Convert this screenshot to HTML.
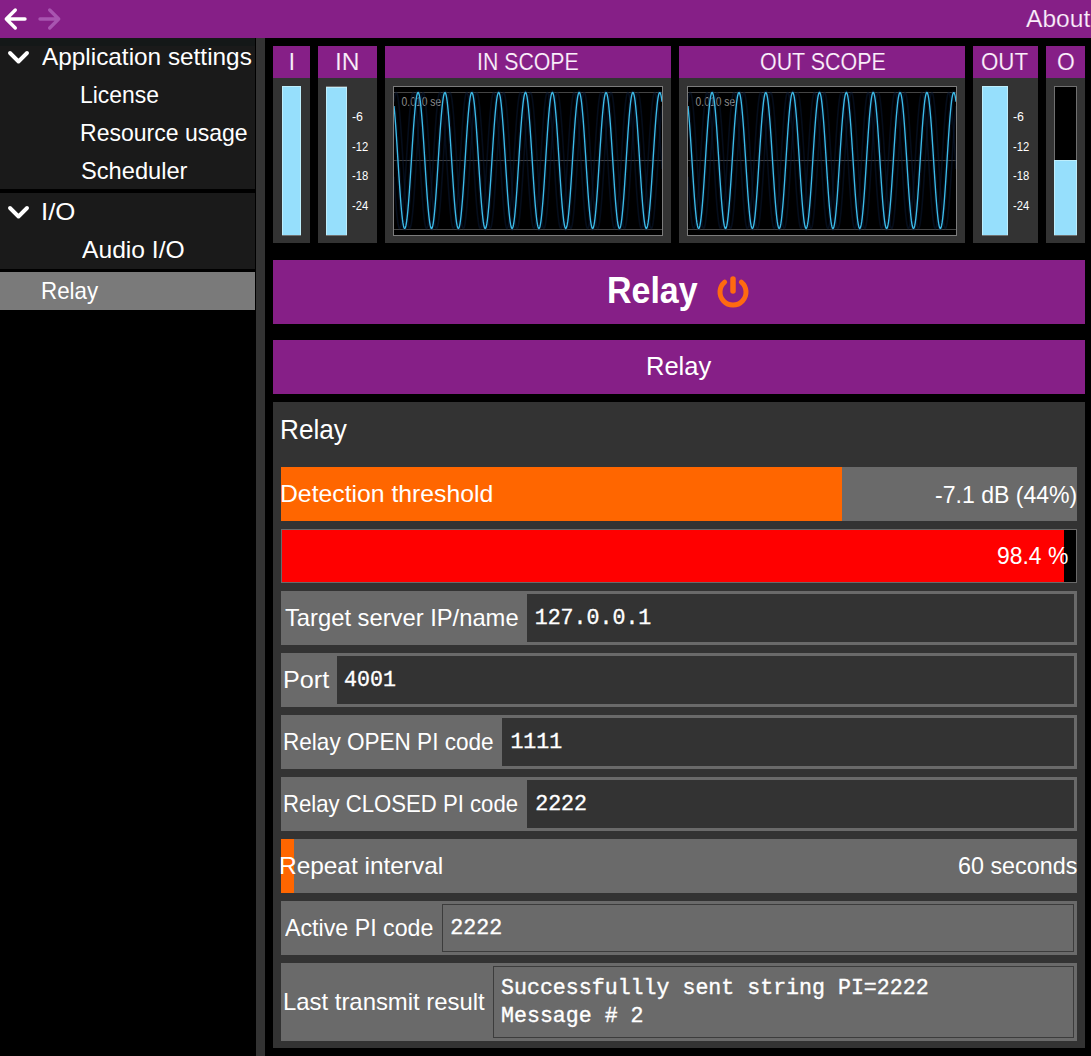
<!DOCTYPE html>
<html><head><meta charset="utf-8"><style>
html,body{margin:0;padding:0;background:#000;width:1091px;height:1056px;overflow:hidden;position:relative}
body>div,body>svg{position:absolute;margin:0}
</style></head><body>
<div style="left:0px;top:0px;width:1091px;height:38px;background:#861f87;"></div>
<svg style="left:0px;top:0px;" width="70" height="38" viewBox="0 0 70 38"><g fill="none" stroke-linecap="round" stroke-linejoin="round" stroke-width="3.4"><path d="M15.3 10 L6.3 19 L15.3 28 M6.3 19 H25" stroke="#ffffff"/><path d="M49.7 10 L58.7 19 L49.7 28 M58.7 19 H40" stroke="#a855b0"/></g></svg>
<div style="left:1025.70px;top:6.98px;font:400 24.5px/24.5px 'Liberation Sans';color:#fbeefb;white-space:pre;transform:scaleX(1.0047);transform-origin:0 0;-webkit-text-stroke:0.2px #861f87;">About</div>
<div style="left:0px;top:38px;width:255px;height:8px;background:#141818;"></div>
<div style="left:0px;top:46px;width:255px;height:143px;background:#1a1a1a;"></div>
<div style="left:0px;top:193px;width:255px;height:76px;background:#1a1a1a;"></div>
<div style="left:0px;top:272px;width:255px;height:38px;background:#7a7a7a;"></div>
<div style="left:256px;top:38px;width:9px;height:1018px;background:#333333;"></div>
<svg style="left:0px;top:45px;" width="40" height="30" viewBox="0 0 40 30"><path d="M10 8 L18.5 16.5 L27 8" fill="none" stroke="#fff" stroke-width="3.9" stroke-linecap="round" stroke-linejoin="round"/></svg>
<svg style="left:0px;top:200px;" width="40" height="30" viewBox="0 0 40 30"><path d="M10 8 L18.5 16.5 L27 8" fill="none" stroke="#fff" stroke-width="3.9" stroke-linecap="round" stroke-linejoin="round"/></svg>
<div style="left:42.40px;top:45.30px;font:400 24px/24px 'Liberation Sans';color:#ffffff;white-space:pre;transform:scaleX(1.0146);transform-origin:0 0;">Application settings</div>
<div style="left:79.79px;top:83.30px;font:400 24px/24px 'Liberation Sans';color:#ffffff;white-space:pre;transform:scaleX(0.9537);transform-origin:0 0;">License</div>
<div style="left:79.78px;top:121.10px;font:400 24px/24px 'Liberation Sans';color:#ffffff;white-space:pre;transform:scaleX(0.9593);transform-origin:0 0;">Resource usage</div>
<div style="left:80.71px;top:158.90px;font:400 24px/24px 'Liberation Sans';color:#ffffff;white-space:pre;transform:scaleX(0.9850);transform-origin:0 0;">Scheduler</div>
<div style="left:41.05px;top:200.20px;font:400 24px/24px 'Liberation Sans';color:#ffffff;white-space:pre;transform:scaleX(1.0759);transform-origin:0 0;">I/O</div>
<div style="left:81.90px;top:237.60px;font:400 24px/24px 'Liberation Sans';color:#ffffff;white-space:pre;transform:scaleX(1.0263);transform-origin:0 0;">Audio I/O</div>
<div style="left:41.34px;top:278.90px;font:400 24px/24px 'Liberation Sans';color:#ffffff;white-space:pre;transform:scaleX(0.9305);transform-origin:0 0;">Relay</div>
<div style="left:273px;top:46px;width:37px;height:32px;background:#861f87;"></div>
<div style="left:273px;top:78px;width:37px;height:165px;background:#333333;"></div>
<div style="left:288.60px;top:50.30px;font:400 24px/24px 'Liberation Sans';color:#fbeefb;white-space:pre;-webkit-text-stroke:0.15px #861f87;">I</div>
<div style="left:318px;top:46px;width:59px;height:32px;background:#861f87;"></div>
<div style="left:318px;top:78px;width:59px;height:165px;background:#333333;"></div>
<div style="left:334.95px;top:50.30px;font:400 24px/24px 'Liberation Sans';color:#fbeefb;white-space:pre;transform:scaleX(1.0238);transform-origin:0 0;-webkit-text-stroke:0.15px #861f87;">IN</div>
<div style="left:385px;top:46px;width:286px;height:32px;background:#861f87;"></div>
<div style="left:385px;top:78px;width:286px;height:165px;background:#333333;"></div>
<div style="left:476.83px;top:50.30px;font:400 24px/24px 'Liberation Sans';color:#fbeefb;white-space:pre;transform:scaleX(0.8875);transform-origin:0 0;-webkit-text-stroke:0.15px #861f87;">IN SCOPE</div>
<div style="left:679px;top:46px;width:286px;height:32px;background:#861f87;"></div>
<div style="left:679px;top:78px;width:286px;height:165px;background:#333333;"></div>
<div style="left:759.61px;top:50.30px;font:400 24px/24px 'Liberation Sans';color:#fbeefb;white-space:pre;transform:scaleX(0.8921);transform-origin:0 0;-webkit-text-stroke:0.15px #861f87;">OUT SCOPE</div>
<div style="left:973px;top:46px;width:65px;height:32px;background:#861f87;"></div>
<div style="left:973px;top:78px;width:65px;height:165px;background:#333333;"></div>
<div style="left:981.47px;top:50.30px;font:400 24px/24px 'Liberation Sans';color:#fbeefb;white-space:pre;transform:scaleX(0.9306);transform-origin:0 0;-webkit-text-stroke:0.15px #861f87;">OUT</div>
<div style="left:1046px;top:46px;width:39px;height:32px;background:#861f87;"></div>
<div style="left:1046px;top:78px;width:39px;height:165px;background:#333333;"></div>
<div style="left:1056.75px;top:50.30px;font:400 24px/24px 'Liberation Sans';color:#fbeefb;white-space:pre;transform:scaleX(0.9529);transform-origin:0 0;-webkit-text-stroke:0.15px #861f87;">O</div>
<div style="left:282px;top:86px;width:19px;height:150px;background:#000000;box-sizing:border-box;border:1px solid #707070;"></div>
<div style="left:282px;top:86px;width:19px;height:149px;background:#96dffc;box-sizing:border-box;border:1px solid #bdeefc;border-bottom:none;"></div>
<div style="left:326px;top:86px;width:21px;height:150px;background:#000000;box-sizing:border-box;border:1px solid #707070;"></div>
<div style="left:326px;top:87px;width:21px;height:148px;background:#96dffc;box-sizing:border-box;border:1px solid #bdeefc;border-bottom:none;"></div>
<div style="left:982px;top:86px;width:26px;height:150px;background:#000000;box-sizing:border-box;border:1px solid #707070;"></div>
<div style="left:982px;top:86px;width:26px;height:149px;background:#96dffc;box-sizing:border-box;border:1px solid #bdeefc;border-bottom:none;"></div>
<div style="left:1054px;top:86px;width:23px;height:150px;background:#000000;box-sizing:border-box;border:1px solid #707070;"></div>
<div style="left:1054px;top:159.5px;width:23px;height:75.5px;background:#96dffc;box-sizing:border-box;border:1px solid #bdeefc;border-bottom:none;"></div>
<div style="left:351.90px;top:111.20px;font:400 12px/12px 'Liberation Sans';color:#ffffff;white-space:pre;transform:scaleX(1.0300);transform-origin:0 0;">-6</div>
<div style="left:351.90px;top:140.50px;font:400 12px/12px 'Liberation Sans';color:#ffffff;white-space:pre;transform:scaleX(0.9353);transform-origin:0 0;">-12</div>
<div style="left:351.90px;top:170.00px;font:400 12px/12px 'Liberation Sans';color:#ffffff;white-space:pre;transform:scaleX(0.9353);transform-origin:0 0;">-18</div>
<div style="left:351.90px;top:199.60px;font:400 12px/12px 'Liberation Sans';color:#ffffff;white-space:pre;transform:scaleX(0.9353);transform-origin:0 0;">-24</div>
<div style="left:1012.60px;top:111.20px;font:400 12px/12px 'Liberation Sans';color:#ffffff;white-space:pre;transform:scaleX(1.0300);transform-origin:0 0;">-6</div>
<div style="left:1012.60px;top:140.50px;font:400 12px/12px 'Liberation Sans';color:#ffffff;white-space:pre;transform:scaleX(0.9353);transform-origin:0 0;">-12</div>
<div style="left:1012.60px;top:170.00px;font:400 12px/12px 'Liberation Sans';color:#ffffff;white-space:pre;transform:scaleX(0.9353);transform-origin:0 0;">-18</div>
<div style="left:1012.60px;top:199.60px;font:400 12px/12px 'Liberation Sans';color:#ffffff;white-space:pre;transform:scaleX(0.9353);transform-origin:0 0;">-24</div>
<svg style="left:393px;top:86px;" width="270" height="150" viewBox="0 0 270 150"><rect x="0.5" y="0.5" width="269" height="149" fill="#000" stroke="#7c7c7c" stroke-width="1"/><line x1="1" y1="6.5" x2="269" y2="6.5" stroke="#444444" stroke-width="1"/><line x1="1" y1="74.5" x2="269" y2="74.5" stroke="#444444" stroke-width="1"/><line x1="1" y1="143.5" x2="269" y2="143.5" stroke="#444444" stroke-width="1"/><text x="8.6" y="20" font-family="Liberation Sans" font-size="12.5" fill="#8c8c8c" textLength="39.6" lengthAdjust="spacingAndGlyphs">0.010 se</text><clipPath id="c393"><rect x="1" y="1" width="268" height="148"/></clipPath><path d="M1.00,90.85 L1.50,98.39 L1.99,105.60 L2.49,112.40 L2.99,118.69 L3.48,124.38 L3.98,129.40 L4.47,133.68 L4.97,137.16 L5.47,139.80 L5.96,141.56 L6.46,142.41 L6.96,142.35 L7.45,141.38 L7.95,139.50 L8.44,136.75 L8.94,133.16 L9.44,128.78 L9.93,123.67 L10.43,117.90 L10.93,111.54 L11.42,104.68 L11.92,97.42 L12.41,89.84 L12.91,82.06 L13.41,74.18 L13.90,66.31 L14.40,58.54 L14.90,50.99 L15.39,43.75 L15.89,36.93 L16.39,30.62 L16.88,24.89 L17.38,19.84 L17.87,15.52 L18.37,11.99 L18.87,9.31 L19.36,7.51 L19.86,6.61 L20.36,6.62 L20.85,7.55 L21.35,9.38 L21.84,12.09 L22.34,15.64 L22.84,19.98 L23.33,25.05 L23.83,30.80 L24.33,37.13 L24.82,43.96 L25.32,51.21 L25.81,58.77 L26.31,66.54 L26.81,74.42 L27.30,82.30 L27.80,90.07 L28.30,97.64 L28.79,104.89 L29.29,111.74 L29.79,118.08 L30.28,123.83 L30.78,128.93 L31.27,133.28 L31.77,136.85 L32.27,139.57 L32.76,141.42 L33.26,142.37 L33.76,142.40 L34.25,141.52 L34.75,139.73 L35.24,137.07 L35.74,133.56 L36.24,129.26 L36.73,124.22 L37.23,118.51 L37.73,112.20 L38.22,105.39 L38.72,98.17 L39.21,90.62 L39.71,82.86 L40.21,74.98 L40.70,67.10 L41.20,59.31 L41.70,51.73 L42.19,44.46 L42.69,37.60 L43.19,31.23 L43.68,25.44 L44.18,20.31 L44.67,15.92 L45.17,12.31 L45.67,9.54 L46.16,7.65 L46.66,6.66 L47.16,6.58 L47.65,7.42 L48.15,9.16 L48.64,11.78 L49.14,15.24 L49.64,19.51 L50.13,24.51 L50.63,30.19 L51.13,36.47 L51.62,43.25 L52.12,50.46 L52.61,57.99 L53.11,65.75 L53.61,73.62 L54.10,81.51 L54.60,89.30 L55.10,96.89 L55.59,104.18 L56.09,111.07 L56.59,117.47 L57.08,123.28 L57.58,128.44 L58.07,132.88 L58.57,136.53 L59.07,139.34 L59.56,141.28 L60.06,142.31 L60.56,142.44 L61.05,141.65 L61.55,139.95 L62.04,137.38 L62.54,133.95 L63.04,129.73 L63.53,124.76 L64.03,119.11 L64.53,112.86 L65.02,106.10 L65.52,98.91 L66.01,91.39 L66.51,83.64 L67.01,75.77 L67.50,67.89 L68.00,60.09 L68.50,52.49 L68.99,45.18 L69.49,38.27 L69.99,31.84 L70.48,25.99 L70.98,20.80 L71.47,16.33 L71.97,12.64 L72.47,9.78 L72.96,7.80 L73.46,6.72 L73.96,6.55 L74.45,7.29 L74.95,8.94 L75.44,11.47 L75.94,14.86 L76.44,19.04 L76.93,23.98 L77.43,29.59 L77.93,35.81 L78.42,42.55 L78.92,49.72 L79.41,57.22 L79.91,64.96 L80.41,72.83 L80.90,80.72 L81.40,88.52 L81.90,96.14 L82.39,103.46 L82.89,110.40 L83.39,116.85 L83.88,122.73 L84.38,127.96 L84.87,132.47 L85.37,136.20 L85.87,139.09 L86.36,141.12 L86.86,142.25 L87.36,142.47 L87.85,141.77 L88.35,140.16 L88.84,137.68 L89.34,134.33 L89.84,130.19 L90.33,125.29 L90.83,119.71 L91.33,113.52 L91.82,106.80 L92.32,99.65 L92.81,92.16 L93.31,84.43 L93.81,76.57 L94.30,68.68 L94.80,60.87 L95.30,53.24 L95.79,45.90 L96.29,38.94 L96.79,32.47 L97.28,26.55 L97.78,21.29 L98.27,16.74 L98.77,12.97 L99.27,10.03 L99.76,7.96 L100.26,6.78 L100.76,6.52 L101.25,7.17 L101.75,8.73 L102.24,11.18 L102.74,14.48 L103.24,18.59 L103.73,23.45 L104.23,28.99 L104.73,35.16 L105.22,41.85 L105.72,48.98 L106.21,56.46 L106.71,64.17 L107.21,72.03 L107.70,79.92 L108.20,87.74 L108.70,95.38 L109.19,102.74 L109.69,109.72 L110.19,116.22 L110.68,122.16 L111.18,127.46 L111.67,132.05 L112.17,135.86 L112.67,138.84 L113.16,140.96 L113.66,142.18 L114.16,142.49 L114.65,141.88 L115.15,140.37 L115.64,137.97 L116.14,134.71 L116.64,130.64 L117.13,125.82 L117.63,120.30 L118.13,114.17 L118.62,107.50 L119.12,100.39 L119.61,92.93 L120.11,85.22 L120.61,77.36 L121.10,69.47 L121.60,61.65 L122.10,54.00 L122.59,46.62 L123.09,39.62 L123.59,33.09 L124.08,27.12 L124.58,21.79 L125.07,17.17 L125.57,13.32 L126.07,10.29 L126.56,8.13 L127.06,6.86 L127.56,6.51 L128.05,7.07 L128.55,8.54 L129.04,10.89 L129.54,14.11 L130.04,18.14 L130.53,22.92 L131.03,28.41 L131.53,34.51 L132.02,41.15 L132.52,48.24 L133.01,55.69 L133.51,63.39 L134.01,71.24 L134.50,79.13 L135.00,86.96 L135.50,94.62 L135.99,102.01 L136.49,109.03 L136.99,115.59 L137.48,121.59 L137.98,126.96 L138.47,131.62 L138.97,135.51 L139.47,138.58 L139.96,140.78 L140.46,142.10 L140.96,142.50 L141.45,141.98 L141.95,140.56 L142.44,138.25 L142.94,135.07 L143.44,131.09 L143.93,126.33 L144.43,120.89 L144.93,114.81 L145.42,108.19 L145.92,101.12 L146.41,93.69 L146.91,86.00 L147.41,78.16 L147.90,70.27 L148.40,62.43 L148.90,54.76 L149.39,47.35 L149.89,40.31 L150.39,33.73 L150.88,27.70 L151.38,22.30 L151.87,17.60 L152.37,13.67 L152.87,10.56 L153.36,8.31 L153.86,6.95 L154.36,6.50 L154.85,6.97 L155.35,8.35 L155.84,10.62 L156.34,13.75 L156.84,17.69 L157.33,22.41 L157.83,27.82 L158.33,33.87 L158.82,40.46 L159.32,47.51 L159.81,54.93 L160.31,62.60 L160.81,70.44 L161.30,78.34 L161.80,86.18 L162.30,93.86 L162.79,101.28 L163.29,108.35 L163.79,114.95 L164.28,121.01 L164.78,126.45 L165.27,131.18 L165.77,135.15 L166.27,138.31 L166.76,140.60 L167.26,142.01 L167.76,142.50 L168.25,142.08 L168.75,140.74 L169.24,138.52 L169.74,135.43 L170.24,131.52 L170.73,126.85 L171.23,121.46 L171.73,115.45 L172.22,108.88 L172.72,101.85 L173.21,94.45 L173.71,86.79 L174.21,78.95 L174.70,71.06 L175.20,63.21 L175.70,55.52 L176.19,48.08 L176.69,41.00 L177.19,34.37 L177.68,28.28 L178.18,22.81 L178.67,18.04 L179.17,14.03 L179.67,10.83 L180.16,8.49 L180.66,7.04 L181.16,6.50 L181.65,6.88 L182.15,8.17 L182.64,10.35 L183.14,13.39 L183.64,17.26 L184.13,21.90 L184.63,27.25 L185.13,33.23 L185.62,39.78 L186.12,46.78 L186.61,54.17 L187.11,61.82 L187.61,69.65 L188.10,77.54 L188.60,85.39 L189.10,93.10 L189.59,100.55 L190.09,107.65 L190.59,114.31 L191.08,120.43 L191.58,125.93 L192.07,130.74 L192.57,134.79 L193.07,138.03 L193.56,140.41 L194.06,141.90 L194.56,142.49 L195.05,142.16 L195.55,140.92 L196.04,138.78 L196.54,135.78 L197.04,131.95 L197.53,127.35 L198.03,122.04 L198.53,116.08 L199.02,109.57 L199.52,102.58 L200.01,95.21 L200.51,87.57 L201.01,79.75 L201.50,71.86 L202.00,64.00 L202.50,56.29 L202.99,48.82 L203.49,41.69 L203.99,35.01 L204.48,28.86 L204.98,23.33 L205.47,18.48 L205.97,14.39 L206.47,11.11 L206.96,8.69 L207.46,7.15 L207.96,6.52 L208.45,6.80 L208.95,8.00 L209.44,10.09 L209.94,13.05 L210.44,16.84 L210.93,21.40 L211.43,26.68 L211.93,32.60 L212.42,39.09 L212.92,46.06 L213.41,53.41 L213.91,61.04 L214.41,68.86 L214.90,76.75 L215.40,84.61 L215.90,92.33 L216.39,99.81 L216.89,106.96 L217.39,113.66 L217.88,119.84 L218.38,125.41 L218.87,130.29 L219.37,134.42 L219.87,137.74 L220.36,140.21 L220.86,141.80 L221.36,142.47 L221.85,142.24 L222.35,141.09 L222.84,139.04 L223.34,136.12 L223.84,132.37 L224.33,127.85 L224.83,122.60 L225.33,116.71 L225.82,110.25 L226.32,103.30 L226.81,95.97 L227.31,88.35 L227.81,80.54 L228.30,72.65 L228.80,64.79 L229.30,57.05 L229.79,49.55 L230.29,42.39 L230.79,35.66 L231.28,29.46 L231.78,23.86 L232.27,18.94 L232.77,14.77 L233.27,11.41 L233.76,8.89 L234.26,7.26 L234.76,6.54 L235.25,6.73 L235.75,7.83 L236.24,9.84 L236.74,12.71 L237.24,16.42 L237.73,20.91 L238.23,26.12 L238.73,31.98 L239.22,38.42 L239.72,45.34 L240.21,52.65 L240.71,60.26 L241.21,68.06 L241.70,75.95 L242.20,83.82 L242.70,91.56 L243.19,99.07 L243.69,106.26 L244.19,113.01 L244.68,119.24 L245.18,124.88 L245.67,129.83 L246.17,134.04 L246.67,137.44 L247.16,140.00 L247.66,141.68 L248.16,142.45 L248.65,142.30 L249.15,141.24 L249.64,139.28 L250.14,136.45 L250.64,132.79 L251.13,128.34 L251.63,123.16 L252.13,117.33 L252.62,110.92 L253.12,104.02 L253.61,96.72 L254.11,89.13 L254.61,81.33 L255.10,73.45 L255.60,65.57 L256.10,57.82 L256.59,50.30 L257.09,43.10 L257.59,36.32 L258.08,30.06 L258.58,24.39 L259.07,19.40 L259.57,15.16 L260.07,11.71 L260.56,9.11 L261.06,7.39 L261.56,6.57 L262.05,6.67 L262.55,7.68 L263.04,9.60 L263.54,12.38 L264.04,16.01 L264.53,20.42 L265.03,25.56 L265.53,31.36 L266.02,37.74 L266.52,44.62 L267.01,51.90 L267.51,59.49 L268.01,67.27 L268.50,75.16 L269.00,83.03" fill="none" stroke="#0a1a36" stroke-width="1.6" opacity="0.5" clip-path="url(#c393)"/><path d="M1.00,15.71 L1.50,12.15 L1.99,9.42 L2.49,7.58 L2.99,6.63 L3.48,6.60 L3.98,7.48 L4.47,9.27 L4.97,11.94 L5.47,15.45 L5.96,19.75 L6.46,24.79 L6.96,30.50 L7.45,36.81 L7.95,43.62 L8.44,50.85 L8.94,58.40 L9.44,66.16 L9.93,74.04 L10.43,81.92 L10.93,89.70 L11.42,97.28 L11.92,104.55 L12.41,111.42 L12.91,117.78 L13.41,123.57 L13.90,128.69 L14.40,133.09 L14.90,136.69 L15.39,139.46 L15.89,141.35 L16.39,142.34 L16.88,142.42 L17.38,141.58 L17.87,139.84 L18.37,137.22 L18.87,133.75 L19.36,129.49 L19.86,124.48 L20.36,118.80 L20.85,112.52 L21.35,105.73 L21.84,98.52 L22.34,90.99 L22.84,83.24 L23.33,75.36 L23.83,67.48 L24.33,59.69 L24.82,52.10 L25.32,44.81 L25.81,37.92 L26.31,31.52 L26.81,25.71 L27.30,20.55 L27.80,16.11 L28.30,12.47 L28.79,9.66 L29.29,7.72 L29.79,6.68 L30.28,6.56 L30.78,7.35 L31.27,9.05 L31.77,11.63 L32.27,15.05 L32.76,19.28 L33.26,24.25 L33.76,29.90 L34.25,36.15 L34.75,42.91 L35.24,50.10 L35.74,57.62 L36.24,65.37 L36.73,73.24 L37.23,81.13 L37.73,88.92 L38.22,96.53 L38.72,103.83 L39.21,110.75 L39.71,117.17 L40.21,123.02 L40.70,128.21 L41.20,132.68 L41.70,136.37 L42.19,139.22 L42.69,141.20 L43.19,142.29 L43.68,142.45 L44.18,141.71 L44.67,140.06 L45.17,137.52 L45.67,134.14 L46.16,129.95 L46.66,125.02 L47.16,119.40 L47.65,113.18 L48.15,106.44 L48.64,99.27 L49.14,91.76 L49.64,84.02 L50.13,76.16 L50.63,68.27 L51.13,60.46 L51.62,52.85 L52.12,45.53 L52.61,38.59 L53.11,32.14 L53.61,26.26 L54.10,21.03 L54.60,16.53 L55.10,12.80 L55.59,9.90 L56.09,7.88 L56.59,6.75 L57.08,6.53 L57.58,7.23 L58.07,8.84 L58.57,11.33 L59.07,14.67 L59.56,18.82 L60.06,23.72 L60.56,29.30 L61.05,35.49 L61.55,42.21 L62.04,49.36 L62.54,56.85 L63.04,64.58 L63.53,72.44 L64.03,80.33 L64.53,88.15 L65.02,95.77 L65.52,103.11 L66.01,110.07 L66.51,116.55 L67.01,122.46 L67.50,127.72 L68.00,132.27 L68.50,136.03 L68.99,138.97 L69.49,141.04 L69.99,142.22 L70.48,142.48 L70.98,141.82 L71.47,140.26 L71.97,137.82 L72.47,134.52 L72.96,130.41 L73.46,125.54 L73.96,119.99 L74.45,113.83 L74.95,107.14 L75.44,100.01 L75.94,92.53 L76.44,84.81 L76.93,76.95 L77.43,69.06 L77.93,61.24 L78.42,53.60 L78.92,46.25 L79.41,39.27 L79.91,32.77 L80.41,26.83 L80.90,21.53 L81.40,16.95 L81.90,13.14 L82.39,10.15 L82.89,8.04 L83.39,6.82 L83.88,6.51 L84.38,7.12 L84.87,8.64 L85.37,11.04 L85.87,14.30 L86.36,18.37 L86.86,23.19 L87.36,28.71 L87.85,34.84 L88.35,41.51 L88.84,48.63 L89.34,56.09 L89.84,63.80 L90.33,71.65 L90.83,79.54 L91.33,87.37 L91.82,95.02 L92.32,102.39 L92.81,109.39 L93.31,115.92 L93.81,121.89 L94.30,127.22 L94.80,131.84 L95.30,135.69 L95.79,138.72 L96.29,140.87 L96.79,142.14 L97.28,142.49 L97.78,141.93 L98.27,140.46 L98.77,138.10 L99.27,134.89 L99.76,130.86 L100.26,126.07 L100.76,120.58 L101.25,114.48 L101.75,107.83 L102.24,100.74 L102.74,93.30 L103.24,85.60 L103.73,77.75 L104.23,69.86 L104.73,62.03 L105.22,54.36 L105.72,46.97 L106.21,39.95 L106.71,33.40 L107.21,27.40 L107.70,22.03 L108.20,17.37 L108.70,13.48 L109.19,10.42 L109.69,8.21 L110.19,6.90 L110.68,6.50 L111.18,7.02 L111.67,8.44 L112.17,10.76 L112.67,13.93 L113.16,17.92 L113.66,22.68 L114.16,28.13 L114.65,34.20 L115.15,40.82 L115.64,47.89 L116.14,55.32 L116.64,63.01 L117.13,70.86 L117.63,78.75 L118.13,86.58 L118.62,94.26 L119.12,101.66 L119.61,108.70 L120.11,115.28 L120.61,121.31 L121.10,126.71 L121.60,131.41 L122.10,135.34 L122.59,138.45 L123.09,140.70 L123.59,142.05 L124.08,142.50 L124.58,142.03 L125.07,140.65 L125.57,138.38 L126.07,135.25 L126.56,131.30 L127.06,126.58 L127.56,121.16 L128.05,115.12 L128.55,108.53 L129.04,101.47 L129.54,94.06 L130.04,86.38 L130.53,78.54 L131.03,70.65 L131.53,62.81 L132.02,55.12 L132.52,47.70 L133.01,40.64 L133.51,34.04 L134.01,27.98 L134.50,22.54 L135.00,17.81 L135.50,13.84 L135.99,10.69 L136.49,8.39 L136.99,6.99 L137.48,6.50 L137.98,6.92 L138.47,8.26 L138.97,10.49 L139.47,13.58 L139.96,17.49 L140.46,22.16 L140.96,27.55 L141.45,33.56 L141.95,40.13 L142.44,47.16 L142.94,54.56 L143.44,62.23 L143.93,70.06 L144.43,77.95 L144.93,85.80 L145.42,93.49 L145.92,100.93 L146.41,108.01 L146.91,114.64 L147.41,120.73 L147.90,126.20 L148.40,130.97 L148.90,134.98 L149.39,138.17 L149.89,140.51 L150.39,141.96 L150.88,142.50 L151.38,142.12 L151.87,140.83 L152.37,138.65 L152.87,135.60 L153.36,131.73 L153.86,127.09 L154.36,121.74 L154.85,115.75 L155.35,109.21 L155.84,102.20 L156.34,94.82 L156.84,87.16 L157.33,79.34 L157.83,71.44 L158.33,63.59 L158.82,55.89 L159.32,48.43 L159.81,41.33 L160.31,34.68 L160.81,28.56 L161.30,23.06 L161.80,18.25 L162.30,14.20 L162.79,10.97 L163.29,8.59 L163.79,7.09 L164.28,6.51 L164.78,6.84 L165.27,8.08 L165.77,10.22 L166.27,13.23 L166.76,17.06 L167.26,21.66 L167.76,26.97 L168.25,32.93 L168.75,39.45 L169.24,46.43 L169.74,53.80 L170.24,61.45 L170.73,69.27 L171.23,77.16 L171.73,85.01 L172.22,92.73 L172.72,100.20 L173.21,107.32 L173.71,114.00 L174.21,120.15 L174.70,125.68 L175.20,130.52 L175.70,134.61 L176.19,137.89 L176.69,140.32 L177.19,141.85 L177.68,142.48 L178.18,142.20 L178.67,141.00 L179.17,138.91 L179.67,135.95 L180.16,132.16 L180.66,127.59 L181.16,122.31 L181.65,116.38 L182.15,109.89 L182.64,102.93 L183.14,95.58 L183.64,87.94 L184.13,80.13 L184.63,72.24 L185.13,64.38 L185.62,56.65 L186.12,49.17 L186.61,42.03 L187.11,35.32 L187.61,29.15 L188.10,23.58 L188.60,18.70 L189.10,14.57 L189.59,11.25 L190.09,8.79 L190.59,7.20 L191.08,6.53 L191.58,6.77 L192.07,7.92 L192.57,9.97 L193.07,12.89 L193.56,16.63 L194.06,21.16 L194.56,26.41 L195.05,32.30 L195.55,38.77 L196.04,45.71 L196.54,53.04 L197.04,60.67 L197.53,68.47 L198.03,76.36 L198.53,84.23 L199.02,91.96 L199.52,99.46 L200.01,106.62 L200.51,113.35 L201.01,119.55 L201.50,125.15 L202.00,130.07 L202.50,134.24 L202.99,137.60 L203.49,140.11 L203.99,141.74 L204.48,142.46 L204.98,142.27 L205.47,141.16 L205.97,139.16 L206.47,136.28 L206.96,132.57 L207.46,128.08 L207.96,122.87 L208.45,117.01 L208.95,110.57 L209.44,103.65 L209.94,96.33 L210.44,88.72 L210.93,80.92 L211.43,73.03 L211.93,65.17 L212.42,57.42 L212.92,49.91 L213.41,42.73 L213.91,35.98 L214.41,29.74 L214.90,24.11 L215.40,19.16 L215.90,14.95 L216.39,11.55 L216.89,8.99 L217.39,7.32 L217.88,6.55 L218.38,6.70 L218.87,7.76 L219.37,9.72 L219.87,12.55 L220.36,16.22 L220.86,20.67 L221.36,25.85 L221.85,31.68 L222.35,38.09 L222.84,44.99 L223.34,52.29 L223.84,59.89 L224.33,67.68 L224.83,75.57 L225.33,83.44 L225.82,91.19 L226.32,98.72 L226.81,105.92 L227.31,112.69 L227.81,118.96 L228.30,124.62 L228.80,129.61 L229.30,133.85 L229.79,137.30 L230.29,139.90 L230.79,141.62 L231.28,142.43 L231.78,142.33 L232.27,141.31 L232.77,139.40 L233.27,136.61 L233.76,132.98 L234.26,128.57 L234.76,123.43 L235.25,117.63 L235.75,111.24 L236.24,104.36 L236.74,97.08 L237.24,89.50 L237.73,81.71 L238.23,73.83 L238.73,65.95 L239.22,58.20 L239.72,50.66 L240.21,43.44 L240.71,36.64 L241.21,30.35 L241.70,24.65 L242.20,19.63 L242.70,15.34 L243.19,11.86 L243.69,9.21 L244.19,7.45 L244.68,6.59 L245.18,6.64 L245.67,7.61 L246.17,9.48 L246.67,12.23 L247.16,15.81 L247.66,20.19 L248.16,25.30 L248.65,31.07 L249.15,37.42 L249.64,44.28 L250.14,51.54 L250.64,59.11 L251.13,66.89 L251.63,74.77 L252.13,82.65 L252.62,90.42 L253.12,97.97 L253.61,105.21 L254.11,112.03 L254.61,118.35 L255.10,124.08 L255.60,129.14 L256.10,133.46 L256.59,136.99 L257.09,139.67 L257.59,141.48 L258.08,142.39 L258.58,142.38 L259.07,141.46 L259.57,139.63 L260.07,136.93 L260.56,133.39 L261.06,129.05 L261.56,123.98 L262.05,118.24 L262.55,111.91 L263.04,105.08 L263.54,97.83 L264.04,90.28 L264.53,82.50 L265.03,74.63 L265.53,66.74 L266.02,58.97 L266.52,51.40 L267.01,44.15 L267.51,37.30 L268.01,30.95 L268.50,25.20 L269.00,20.10" fill="none" stroke="#0a1a36" stroke-width="1.6" opacity="0.5" clip-path="url(#c393)"/><path d="M1.00,20.10 L1.50,25.20 L1.99,30.95 L2.49,37.30 L2.99,44.15 L3.48,51.40 L3.98,58.97 L4.47,66.74 L4.97,74.63 L5.47,82.50 L5.96,90.28 L6.46,97.83 L6.96,105.08 L7.45,111.91 L7.95,118.24 L8.44,123.98 L8.94,129.05 L9.44,133.39 L9.93,136.93 L10.43,139.63 L10.93,141.46 L11.42,142.38 L11.92,142.39 L12.41,141.48 L12.91,139.67 L13.41,136.99 L13.90,133.46 L14.40,129.14 L14.90,124.08 L15.39,118.35 L15.89,112.03 L16.39,105.21 L16.88,97.97 L17.38,90.42 L17.87,82.65 L18.37,74.77 L18.87,66.89 L19.36,59.11 L19.86,51.54 L20.36,44.28 L20.85,37.42 L21.35,31.07 L21.84,25.30 L22.34,20.19 L22.84,15.81 L23.33,12.23 L23.83,9.48 L24.33,7.61 L24.82,6.64 L25.32,6.59 L25.81,7.45 L26.31,9.21 L26.81,11.86 L27.30,15.34 L27.80,19.63 L28.30,24.65 L28.79,30.35 L29.29,36.64 L29.79,43.44 L30.28,50.66 L30.78,58.20 L31.27,65.95 L31.77,73.83 L32.27,81.71 L32.76,89.50 L33.26,97.08 L33.76,104.36 L34.25,111.24 L34.75,117.63 L35.24,123.43 L35.74,128.57 L36.24,132.98 L36.73,136.61 L37.23,139.40 L37.73,141.31 L38.22,142.33 L38.72,142.43 L39.21,141.62 L39.71,139.90 L40.21,137.30 L40.70,133.85 L41.20,129.61 L41.70,124.62 L42.19,118.96 L42.69,112.69 L43.19,105.92 L43.68,98.72 L44.18,91.19 L44.67,83.44 L45.17,75.57 L45.67,67.68 L46.16,59.89 L46.66,52.29 L47.16,44.99 L47.65,38.09 L48.15,31.68 L48.64,25.85 L49.14,20.67 L49.64,16.22 L50.13,12.55 L50.63,9.72 L51.13,7.76 L51.62,6.70 L52.12,6.55 L52.61,7.32 L53.11,8.99 L53.61,11.55 L54.10,14.95 L54.60,19.16 L55.10,24.11 L55.59,29.74 L56.09,35.98 L56.59,42.73 L57.08,49.91 L57.58,57.42 L58.07,65.17 L58.57,73.03 L59.07,80.92 L59.56,88.72 L60.06,96.33 L60.56,103.65 L61.05,110.57 L61.55,117.01 L62.04,122.87 L62.54,128.08 L63.04,132.57 L63.53,136.28 L64.03,139.16 L64.53,141.16 L65.02,142.27 L65.52,142.46 L66.01,141.74 L66.51,140.11 L67.01,137.60 L67.50,134.24 L68.00,130.07 L68.50,125.15 L68.99,119.55 L69.49,113.35 L69.99,106.62 L70.48,99.46 L70.98,91.96 L71.47,84.23 L71.97,76.36 L72.47,68.47 L72.96,60.67 L73.46,53.04 L73.96,45.71 L74.45,38.77 L74.95,32.30 L75.44,26.41 L75.94,21.16 L76.44,16.63 L76.93,12.89 L77.43,9.97 L77.93,7.92 L78.42,6.77 L78.92,6.53 L79.41,7.20 L79.91,8.79 L80.41,11.25 L80.90,14.57 L81.40,18.70 L81.90,23.58 L82.39,29.15 L82.89,35.32 L83.39,42.03 L83.88,49.17 L84.38,56.65 L84.87,64.38 L85.37,72.24 L85.87,80.13 L86.36,87.94 L86.86,95.58 L87.36,102.93 L87.85,109.89 L88.35,116.38 L88.84,122.31 L89.34,127.59 L89.84,132.16 L90.33,135.95 L90.83,138.91 L91.33,141.00 L91.82,142.20 L92.32,142.48 L92.81,141.85 L93.31,140.32 L93.81,137.89 L94.30,134.61 L94.80,130.52 L95.30,125.68 L95.79,120.15 L96.29,114.00 L96.79,107.32 L97.28,100.20 L97.78,92.73 L98.27,85.01 L98.77,77.16 L99.27,69.27 L99.76,61.45 L100.26,53.80 L100.76,46.43 L101.25,39.45 L101.75,32.93 L102.24,26.97 L102.74,21.66 L103.24,17.06 L103.73,13.23 L104.23,10.22 L104.73,8.08 L105.22,6.84 L105.72,6.51 L106.21,7.09 L106.71,8.59 L107.21,10.97 L107.70,14.20 L108.20,18.25 L108.70,23.06 L109.19,28.56 L109.69,34.68 L110.19,41.33 L110.68,48.43 L111.18,55.89 L111.67,63.59 L112.17,71.44 L112.67,79.34 L113.16,87.16 L113.66,94.82 L114.16,102.20 L114.65,109.21 L115.15,115.75 L115.64,121.74 L116.14,127.09 L116.64,131.73 L117.13,135.60 L117.63,138.65 L118.13,140.83 L118.62,142.12 L119.12,142.50 L119.61,141.96 L120.11,140.51 L120.61,138.17 L121.10,134.98 L121.60,130.97 L122.10,126.20 L122.59,120.73 L123.09,114.64 L123.59,108.01 L124.08,100.93 L124.58,93.49 L125.07,85.80 L125.57,77.95 L126.07,70.06 L126.56,62.23 L127.06,54.56 L127.56,47.16 L128.05,40.13 L128.55,33.56 L129.04,27.55 L129.54,22.16 L130.04,17.49 L130.53,13.58 L131.03,10.49 L131.53,8.26 L132.02,6.92 L132.52,6.50 L133.01,6.99 L133.51,8.39 L134.01,10.69 L134.50,13.84 L135.00,17.81 L135.50,22.54 L135.99,27.98 L136.49,34.04 L136.99,40.64 L137.48,47.70 L137.98,55.12 L138.47,62.81 L138.97,70.65 L139.47,78.54 L139.96,86.38 L140.46,94.06 L140.96,101.47 L141.45,108.53 L141.95,115.12 L142.44,121.16 L142.94,126.58 L143.44,131.30 L143.93,135.25 L144.43,138.38 L144.93,140.65 L145.42,142.03 L145.92,142.50 L146.41,142.05 L146.91,140.70 L147.41,138.45 L147.90,135.34 L148.40,131.41 L148.90,126.71 L149.39,121.31 L149.89,115.28 L150.39,108.70 L150.88,101.66 L151.38,94.26 L151.87,86.58 L152.37,78.75 L152.87,70.86 L153.36,63.01 L153.86,55.32 L154.36,47.89 L154.85,40.82 L155.35,34.20 L155.84,28.13 L156.34,22.68 L156.84,17.92 L157.33,13.93 L157.83,10.76 L158.33,8.44 L158.82,7.02 L159.32,6.50 L159.81,6.90 L160.31,8.21 L160.81,10.42 L161.30,13.48 L161.80,17.37 L162.30,22.03 L162.79,27.40 L163.29,33.40 L163.79,39.95 L164.28,46.97 L164.78,54.36 L165.27,62.03 L165.77,69.86 L166.27,77.75 L166.76,85.60 L167.26,93.30 L167.76,100.74 L168.25,107.83 L168.75,114.48 L169.24,120.58 L169.74,126.07 L170.24,130.86 L170.73,134.89 L171.23,138.10 L171.73,140.46 L172.22,141.93 L172.72,142.49 L173.21,142.14 L173.71,140.87 L174.21,138.72 L174.70,135.69 L175.20,131.84 L175.70,127.22 L176.19,121.89 L176.69,115.92 L177.19,109.39 L177.68,102.39 L178.18,95.02 L178.67,87.37 L179.17,79.54 L179.67,71.65 L180.16,63.80 L180.66,56.09 L181.16,48.63 L181.65,41.51 L182.15,34.84 L182.64,28.71 L183.14,23.19 L183.64,18.37 L184.13,14.30 L184.63,11.04 L185.13,8.64 L185.62,7.12 L186.12,6.51 L186.61,6.82 L187.11,8.04 L187.61,10.15 L188.10,13.14 L188.60,16.95 L189.10,21.53 L189.59,26.83 L190.09,32.77 L190.59,39.27 L191.08,46.25 L191.58,53.60 L192.07,61.24 L192.57,69.06 L193.07,76.95 L193.56,84.81 L194.06,92.53 L194.56,100.01 L195.05,107.14 L195.55,113.83 L196.04,119.99 L196.54,125.54 L197.04,130.41 L197.53,134.52 L198.03,137.82 L198.53,140.26 L199.02,141.82 L199.52,142.48 L200.01,142.22 L200.51,141.04 L201.01,138.97 L201.50,136.03 L202.00,132.27 L202.50,127.72 L202.99,122.46 L203.49,116.55 L203.99,110.07 L204.48,103.11 L204.98,95.77 L205.47,88.15 L205.97,80.33 L206.47,72.44 L206.96,64.58 L207.46,56.85 L207.96,49.36 L208.45,42.21 L208.95,35.49 L209.44,29.30 L209.94,23.72 L210.44,18.82 L210.93,14.67 L211.43,11.33 L211.93,8.84 L212.42,7.23 L212.92,6.53 L213.41,6.75 L213.91,7.88 L214.41,9.90 L214.90,12.80 L215.40,16.53 L215.90,21.03 L216.39,26.26 L216.89,32.14 L217.39,38.59 L217.88,45.53 L218.38,52.85 L218.87,60.46 L219.37,68.27 L219.87,76.16 L220.36,84.02 L220.86,91.76 L221.36,99.27 L221.85,106.44 L222.35,113.18 L222.84,119.40 L223.34,125.02 L223.84,129.95 L224.33,134.14 L224.83,137.52 L225.33,140.06 L225.82,141.71 L226.32,142.45 L226.81,142.29 L227.31,141.20 L227.81,139.22 L228.30,136.37 L228.80,132.68 L229.30,128.21 L229.79,123.02 L230.29,117.17 L230.79,110.75 L231.28,103.83 L231.78,96.53 L232.27,88.92 L232.77,81.13 L233.27,73.24 L233.76,65.37 L234.26,57.62 L234.76,50.10 L235.25,42.91 L235.75,36.15 L236.24,29.90 L236.74,24.25 L237.24,19.28 L237.73,15.05 L238.23,11.63 L238.73,9.05 L239.22,7.35 L239.72,6.56 L240.21,6.68 L240.71,7.72 L241.21,9.66 L241.70,12.47 L242.20,16.11 L242.70,20.55 L243.19,25.71 L243.69,31.52 L244.19,37.92 L244.68,44.81 L245.18,52.10 L245.67,59.69 L246.17,67.48 L246.67,75.36 L247.16,83.24 L247.66,90.99 L248.16,98.52 L248.65,105.73 L249.15,112.52 L249.64,118.80 L250.14,124.48 L250.64,129.49 L251.13,133.75 L251.63,137.22 L252.13,139.84 L252.62,141.58 L253.12,142.42 L253.61,142.34 L254.11,141.35 L254.61,139.46 L255.10,136.69 L255.60,133.09 L256.10,128.69 L256.59,123.57 L257.09,117.78 L257.59,111.42 L258.08,104.55 L258.58,97.28 L259.07,89.70 L259.57,81.92 L260.07,74.04 L260.56,66.16 L261.06,58.40 L261.56,50.85 L262.05,43.62 L262.55,36.81 L263.04,30.50 L263.54,24.79 L264.04,19.75 L264.53,15.45 L265.03,11.94 L265.53,9.27 L266.02,7.48 L266.52,6.60 L267.01,6.63 L267.51,7.58 L268.01,9.42 L268.50,12.15 L269.00,15.71" fill="none" stroke="#0c1c3c" stroke-width="4" opacity="0.4" clip-path="url(#c393)"/><path d="M1.00,20.10 L1.50,25.20 L1.99,30.95 L2.49,37.30 L2.99,44.15 L3.48,51.40 L3.98,58.97 L4.47,66.74 L4.97,74.63 L5.47,82.50 L5.96,90.28 L6.46,97.83 L6.96,105.08 L7.45,111.91 L7.95,118.24 L8.44,123.98 L8.94,129.05 L9.44,133.39 L9.93,136.93 L10.43,139.63 L10.93,141.46 L11.42,142.38 L11.92,142.39 L12.41,141.48 L12.91,139.67 L13.41,136.99 L13.90,133.46 L14.40,129.14 L14.90,124.08 L15.39,118.35 L15.89,112.03 L16.39,105.21 L16.88,97.97 L17.38,90.42 L17.87,82.65 L18.37,74.77 L18.87,66.89 L19.36,59.11 L19.86,51.54 L20.36,44.28 L20.85,37.42 L21.35,31.07 L21.84,25.30 L22.34,20.19 L22.84,15.81 L23.33,12.23 L23.83,9.48 L24.33,7.61 L24.82,6.64 L25.32,6.59 L25.81,7.45 L26.31,9.21 L26.81,11.86 L27.30,15.34 L27.80,19.63 L28.30,24.65 L28.79,30.35 L29.29,36.64 L29.79,43.44 L30.28,50.66 L30.78,58.20 L31.27,65.95 L31.77,73.83 L32.27,81.71 L32.76,89.50 L33.26,97.08 L33.76,104.36 L34.25,111.24 L34.75,117.63 L35.24,123.43 L35.74,128.57 L36.24,132.98 L36.73,136.61 L37.23,139.40 L37.73,141.31 L38.22,142.33 L38.72,142.43 L39.21,141.62 L39.71,139.90 L40.21,137.30 L40.70,133.85 L41.20,129.61 L41.70,124.62 L42.19,118.96 L42.69,112.69 L43.19,105.92 L43.68,98.72 L44.18,91.19 L44.67,83.44 L45.17,75.57 L45.67,67.68 L46.16,59.89 L46.66,52.29 L47.16,44.99 L47.65,38.09 L48.15,31.68 L48.64,25.85 L49.14,20.67 L49.64,16.22 L50.13,12.55 L50.63,9.72 L51.13,7.76 L51.62,6.70 L52.12,6.55 L52.61,7.32 L53.11,8.99 L53.61,11.55 L54.10,14.95 L54.60,19.16 L55.10,24.11 L55.59,29.74 L56.09,35.98 L56.59,42.73 L57.08,49.91 L57.58,57.42 L58.07,65.17 L58.57,73.03 L59.07,80.92 L59.56,88.72 L60.06,96.33 L60.56,103.65 L61.05,110.57 L61.55,117.01 L62.04,122.87 L62.54,128.08 L63.04,132.57 L63.53,136.28 L64.03,139.16 L64.53,141.16 L65.02,142.27 L65.52,142.46 L66.01,141.74 L66.51,140.11 L67.01,137.60 L67.50,134.24 L68.00,130.07 L68.50,125.15 L68.99,119.55 L69.49,113.35 L69.99,106.62 L70.48,99.46 L70.98,91.96 L71.47,84.23 L71.97,76.36 L72.47,68.47 L72.96,60.67 L73.46,53.04 L73.96,45.71 L74.45,38.77 L74.95,32.30 L75.44,26.41 L75.94,21.16 L76.44,16.63 L76.93,12.89 L77.43,9.97 L77.93,7.92 L78.42,6.77 L78.92,6.53 L79.41,7.20 L79.91,8.79 L80.41,11.25 L80.90,14.57 L81.40,18.70 L81.90,23.58 L82.39,29.15 L82.89,35.32 L83.39,42.03 L83.88,49.17 L84.38,56.65 L84.87,64.38 L85.37,72.24 L85.87,80.13 L86.36,87.94 L86.86,95.58 L87.36,102.93 L87.85,109.89 L88.35,116.38 L88.84,122.31 L89.34,127.59 L89.84,132.16 L90.33,135.95 L90.83,138.91 L91.33,141.00 L91.82,142.20 L92.32,142.48 L92.81,141.85 L93.31,140.32 L93.81,137.89 L94.30,134.61 L94.80,130.52 L95.30,125.68 L95.79,120.15 L96.29,114.00 L96.79,107.32 L97.28,100.20 L97.78,92.73 L98.27,85.01 L98.77,77.16 L99.27,69.27 L99.76,61.45 L100.26,53.80 L100.76,46.43 L101.25,39.45 L101.75,32.93 L102.24,26.97 L102.74,21.66 L103.24,17.06 L103.73,13.23 L104.23,10.22 L104.73,8.08 L105.22,6.84 L105.72,6.51 L106.21,7.09 L106.71,8.59 L107.21,10.97 L107.70,14.20 L108.20,18.25 L108.70,23.06 L109.19,28.56 L109.69,34.68 L110.19,41.33 L110.68,48.43 L111.18,55.89 L111.67,63.59 L112.17,71.44 L112.67,79.34 L113.16,87.16 L113.66,94.82 L114.16,102.20 L114.65,109.21 L115.15,115.75 L115.64,121.74 L116.14,127.09 L116.64,131.73 L117.13,135.60 L117.63,138.65 L118.13,140.83 L118.62,142.12 L119.12,142.50 L119.61,141.96 L120.11,140.51 L120.61,138.17 L121.10,134.98 L121.60,130.97 L122.10,126.20 L122.59,120.73 L123.09,114.64 L123.59,108.01 L124.08,100.93 L124.58,93.49 L125.07,85.80 L125.57,77.95 L126.07,70.06 L126.56,62.23 L127.06,54.56 L127.56,47.16 L128.05,40.13 L128.55,33.56 L129.04,27.55 L129.54,22.16 L130.04,17.49 L130.53,13.58 L131.03,10.49 L131.53,8.26 L132.02,6.92 L132.52,6.50 L133.01,6.99 L133.51,8.39 L134.01,10.69 L134.50,13.84 L135.00,17.81 L135.50,22.54 L135.99,27.98 L136.49,34.04 L136.99,40.64 L137.48,47.70 L137.98,55.12 L138.47,62.81 L138.97,70.65 L139.47,78.54 L139.96,86.38 L140.46,94.06 L140.96,101.47 L141.45,108.53 L141.95,115.12 L142.44,121.16 L142.94,126.58 L143.44,131.30 L143.93,135.25 L144.43,138.38 L144.93,140.65 L145.42,142.03 L145.92,142.50 L146.41,142.05 L146.91,140.70 L147.41,138.45 L147.90,135.34 L148.40,131.41 L148.90,126.71 L149.39,121.31 L149.89,115.28 L150.39,108.70 L150.88,101.66 L151.38,94.26 L151.87,86.58 L152.37,78.75 L152.87,70.86 L153.36,63.01 L153.86,55.32 L154.36,47.89 L154.85,40.82 L155.35,34.20 L155.84,28.13 L156.34,22.68 L156.84,17.92 L157.33,13.93 L157.83,10.76 L158.33,8.44 L158.82,7.02 L159.32,6.50 L159.81,6.90 L160.31,8.21 L160.81,10.42 L161.30,13.48 L161.80,17.37 L162.30,22.03 L162.79,27.40 L163.29,33.40 L163.79,39.95 L164.28,46.97 L164.78,54.36 L165.27,62.03 L165.77,69.86 L166.27,77.75 L166.76,85.60 L167.26,93.30 L167.76,100.74 L168.25,107.83 L168.75,114.48 L169.24,120.58 L169.74,126.07 L170.24,130.86 L170.73,134.89 L171.23,138.10 L171.73,140.46 L172.22,141.93 L172.72,142.49 L173.21,142.14 L173.71,140.87 L174.21,138.72 L174.70,135.69 L175.20,131.84 L175.70,127.22 L176.19,121.89 L176.69,115.92 L177.19,109.39 L177.68,102.39 L178.18,95.02 L178.67,87.37 L179.17,79.54 L179.67,71.65 L180.16,63.80 L180.66,56.09 L181.16,48.63 L181.65,41.51 L182.15,34.84 L182.64,28.71 L183.14,23.19 L183.64,18.37 L184.13,14.30 L184.63,11.04 L185.13,8.64 L185.62,7.12 L186.12,6.51 L186.61,6.82 L187.11,8.04 L187.61,10.15 L188.10,13.14 L188.60,16.95 L189.10,21.53 L189.59,26.83 L190.09,32.77 L190.59,39.27 L191.08,46.25 L191.58,53.60 L192.07,61.24 L192.57,69.06 L193.07,76.95 L193.56,84.81 L194.06,92.53 L194.56,100.01 L195.05,107.14 L195.55,113.83 L196.04,119.99 L196.54,125.54 L197.04,130.41 L197.53,134.52 L198.03,137.82 L198.53,140.26 L199.02,141.82 L199.52,142.48 L200.01,142.22 L200.51,141.04 L201.01,138.97 L201.50,136.03 L202.00,132.27 L202.50,127.72 L202.99,122.46 L203.49,116.55 L203.99,110.07 L204.48,103.11 L204.98,95.77 L205.47,88.15 L205.97,80.33 L206.47,72.44 L206.96,64.58 L207.46,56.85 L207.96,49.36 L208.45,42.21 L208.95,35.49 L209.44,29.30 L209.94,23.72 L210.44,18.82 L210.93,14.67 L211.43,11.33 L211.93,8.84 L212.42,7.23 L212.92,6.53 L213.41,6.75 L213.91,7.88 L214.41,9.90 L214.90,12.80 L215.40,16.53 L215.90,21.03 L216.39,26.26 L216.89,32.14 L217.39,38.59 L217.88,45.53 L218.38,52.85 L218.87,60.46 L219.37,68.27 L219.87,76.16 L220.36,84.02 L220.86,91.76 L221.36,99.27 L221.85,106.44 L222.35,113.18 L222.84,119.40 L223.34,125.02 L223.84,129.95 L224.33,134.14 L224.83,137.52 L225.33,140.06 L225.82,141.71 L226.32,142.45 L226.81,142.29 L227.31,141.20 L227.81,139.22 L228.30,136.37 L228.80,132.68 L229.30,128.21 L229.79,123.02 L230.29,117.17 L230.79,110.75 L231.28,103.83 L231.78,96.53 L232.27,88.92 L232.77,81.13 L233.27,73.24 L233.76,65.37 L234.26,57.62 L234.76,50.10 L235.25,42.91 L235.75,36.15 L236.24,29.90 L236.74,24.25 L237.24,19.28 L237.73,15.05 L238.23,11.63 L238.73,9.05 L239.22,7.35 L239.72,6.56 L240.21,6.68 L240.71,7.72 L241.21,9.66 L241.70,12.47 L242.20,16.11 L242.70,20.55 L243.19,25.71 L243.69,31.52 L244.19,37.92 L244.68,44.81 L245.18,52.10 L245.67,59.69 L246.17,67.48 L246.67,75.36 L247.16,83.24 L247.66,90.99 L248.16,98.52 L248.65,105.73 L249.15,112.52 L249.64,118.80 L250.14,124.48 L250.64,129.49 L251.13,133.75 L251.63,137.22 L252.13,139.84 L252.62,141.58 L253.12,142.42 L253.61,142.34 L254.11,141.35 L254.61,139.46 L255.10,136.69 L255.60,133.09 L256.10,128.69 L256.59,123.57 L257.09,117.78 L257.59,111.42 L258.08,104.55 L258.58,97.28 L259.07,89.70 L259.57,81.92 L260.07,74.04 L260.56,66.16 L261.06,58.40 L261.56,50.85 L262.05,43.62 L262.55,36.81 L263.04,30.50 L263.54,24.79 L264.04,19.75 L264.53,15.45 L265.03,11.94 L265.53,9.27 L266.02,7.48 L266.52,6.60 L267.01,6.63 L267.51,7.58 L268.01,9.42 L268.50,12.15 L269.00,15.71" fill="none" stroke="#3cbce8" stroke-width="1.35" clip-path="url(#c393)"/></svg>
<svg style="left:687px;top:86px;" width="270" height="150" viewBox="0 0 270 150"><rect x="0.5" y="0.5" width="269" height="149" fill="#000" stroke="#7c7c7c" stroke-width="1"/><line x1="1" y1="6.5" x2="269" y2="6.5" stroke="#444444" stroke-width="1"/><line x1="1" y1="74.5" x2="269" y2="74.5" stroke="#444444" stroke-width="1"/><line x1="1" y1="143.5" x2="269" y2="143.5" stroke="#444444" stroke-width="1"/><text x="8.6" y="20" font-family="Liberation Sans" font-size="12.5" fill="#8c8c8c" textLength="39.6" lengthAdjust="spacingAndGlyphs">0.010 se</text><clipPath id="c687"><rect x="1" y="1" width="268" height="148"/></clipPath><path d="M1.00,90.85 L1.50,98.39 L1.99,105.60 L2.49,112.40 L2.99,118.69 L3.48,124.38 L3.98,129.40 L4.47,133.68 L4.97,137.16 L5.47,139.80 L5.96,141.56 L6.46,142.41 L6.96,142.35 L7.45,141.38 L7.95,139.50 L8.44,136.75 L8.94,133.16 L9.44,128.78 L9.93,123.67 L10.43,117.90 L10.93,111.54 L11.42,104.68 L11.92,97.42 L12.41,89.84 L12.91,82.06 L13.41,74.18 L13.90,66.31 L14.40,58.54 L14.90,50.99 L15.39,43.75 L15.89,36.93 L16.39,30.62 L16.88,24.89 L17.38,19.84 L17.87,15.52 L18.37,11.99 L18.87,9.31 L19.36,7.51 L19.86,6.61 L20.36,6.62 L20.85,7.55 L21.35,9.38 L21.84,12.09 L22.34,15.64 L22.84,19.98 L23.33,25.05 L23.83,30.80 L24.33,37.13 L24.82,43.96 L25.32,51.21 L25.81,58.77 L26.31,66.54 L26.81,74.42 L27.30,82.30 L27.80,90.07 L28.30,97.64 L28.79,104.89 L29.29,111.74 L29.79,118.08 L30.28,123.83 L30.78,128.93 L31.27,133.28 L31.77,136.85 L32.27,139.57 L32.76,141.42 L33.26,142.37 L33.76,142.40 L34.25,141.52 L34.75,139.73 L35.24,137.07 L35.74,133.56 L36.24,129.26 L36.73,124.22 L37.23,118.51 L37.73,112.20 L38.22,105.39 L38.72,98.17 L39.21,90.62 L39.71,82.86 L40.21,74.98 L40.70,67.10 L41.20,59.31 L41.70,51.73 L42.19,44.46 L42.69,37.60 L43.19,31.23 L43.68,25.44 L44.18,20.31 L44.67,15.92 L45.17,12.31 L45.67,9.54 L46.16,7.65 L46.66,6.66 L47.16,6.58 L47.65,7.42 L48.15,9.16 L48.64,11.78 L49.14,15.24 L49.64,19.51 L50.13,24.51 L50.63,30.19 L51.13,36.47 L51.62,43.25 L52.12,50.46 L52.61,57.99 L53.11,65.75 L53.61,73.62 L54.10,81.51 L54.60,89.30 L55.10,96.89 L55.59,104.18 L56.09,111.07 L56.59,117.47 L57.08,123.28 L57.58,128.44 L58.07,132.88 L58.57,136.53 L59.07,139.34 L59.56,141.28 L60.06,142.31 L60.56,142.44 L61.05,141.65 L61.55,139.95 L62.04,137.38 L62.54,133.95 L63.04,129.73 L63.53,124.76 L64.03,119.11 L64.53,112.86 L65.02,106.10 L65.52,98.91 L66.01,91.39 L66.51,83.64 L67.01,75.77 L67.50,67.89 L68.00,60.09 L68.50,52.49 L68.99,45.18 L69.49,38.27 L69.99,31.84 L70.48,25.99 L70.98,20.80 L71.47,16.33 L71.97,12.64 L72.47,9.78 L72.96,7.80 L73.46,6.72 L73.96,6.55 L74.45,7.29 L74.95,8.94 L75.44,11.47 L75.94,14.86 L76.44,19.04 L76.93,23.98 L77.43,29.59 L77.93,35.81 L78.42,42.55 L78.92,49.72 L79.41,57.22 L79.91,64.96 L80.41,72.83 L80.90,80.72 L81.40,88.52 L81.90,96.14 L82.39,103.46 L82.89,110.40 L83.39,116.85 L83.88,122.73 L84.38,127.96 L84.87,132.47 L85.37,136.20 L85.87,139.09 L86.36,141.12 L86.86,142.25 L87.36,142.47 L87.85,141.77 L88.35,140.16 L88.84,137.68 L89.34,134.33 L89.84,130.19 L90.33,125.29 L90.83,119.71 L91.33,113.52 L91.82,106.80 L92.32,99.65 L92.81,92.16 L93.31,84.43 L93.81,76.57 L94.30,68.68 L94.80,60.87 L95.30,53.24 L95.79,45.90 L96.29,38.94 L96.79,32.47 L97.28,26.55 L97.78,21.29 L98.27,16.74 L98.77,12.97 L99.27,10.03 L99.76,7.96 L100.26,6.78 L100.76,6.52 L101.25,7.17 L101.75,8.73 L102.24,11.18 L102.74,14.48 L103.24,18.59 L103.73,23.45 L104.23,28.99 L104.73,35.16 L105.22,41.85 L105.72,48.98 L106.21,56.46 L106.71,64.17 L107.21,72.03 L107.70,79.92 L108.20,87.74 L108.70,95.38 L109.19,102.74 L109.69,109.72 L110.19,116.22 L110.68,122.16 L111.18,127.46 L111.67,132.05 L112.17,135.86 L112.67,138.84 L113.16,140.96 L113.66,142.18 L114.16,142.49 L114.65,141.88 L115.15,140.37 L115.64,137.97 L116.14,134.71 L116.64,130.64 L117.13,125.82 L117.63,120.30 L118.13,114.17 L118.62,107.50 L119.12,100.39 L119.61,92.93 L120.11,85.22 L120.61,77.36 L121.10,69.47 L121.60,61.65 L122.10,54.00 L122.59,46.62 L123.09,39.62 L123.59,33.09 L124.08,27.12 L124.58,21.79 L125.07,17.17 L125.57,13.32 L126.07,10.29 L126.56,8.13 L127.06,6.86 L127.56,6.51 L128.05,7.07 L128.55,8.54 L129.04,10.89 L129.54,14.11 L130.04,18.14 L130.53,22.92 L131.03,28.41 L131.53,34.51 L132.02,41.15 L132.52,48.24 L133.01,55.69 L133.51,63.39 L134.01,71.24 L134.50,79.13 L135.00,86.96 L135.50,94.62 L135.99,102.01 L136.49,109.03 L136.99,115.59 L137.48,121.59 L137.98,126.96 L138.47,131.62 L138.97,135.51 L139.47,138.58 L139.96,140.78 L140.46,142.10 L140.96,142.50 L141.45,141.98 L141.95,140.56 L142.44,138.25 L142.94,135.07 L143.44,131.09 L143.93,126.33 L144.43,120.89 L144.93,114.81 L145.42,108.19 L145.92,101.12 L146.41,93.69 L146.91,86.00 L147.41,78.16 L147.90,70.27 L148.40,62.43 L148.90,54.76 L149.39,47.35 L149.89,40.31 L150.39,33.73 L150.88,27.70 L151.38,22.30 L151.87,17.60 L152.37,13.67 L152.87,10.56 L153.36,8.31 L153.86,6.95 L154.36,6.50 L154.85,6.97 L155.35,8.35 L155.84,10.62 L156.34,13.75 L156.84,17.69 L157.33,22.41 L157.83,27.82 L158.33,33.87 L158.82,40.46 L159.32,47.51 L159.81,54.93 L160.31,62.60 L160.81,70.44 L161.30,78.34 L161.80,86.18 L162.30,93.86 L162.79,101.28 L163.29,108.35 L163.79,114.95 L164.28,121.01 L164.78,126.45 L165.27,131.18 L165.77,135.15 L166.27,138.31 L166.76,140.60 L167.26,142.01 L167.76,142.50 L168.25,142.08 L168.75,140.74 L169.24,138.52 L169.74,135.43 L170.24,131.52 L170.73,126.85 L171.23,121.46 L171.73,115.45 L172.22,108.88 L172.72,101.85 L173.21,94.45 L173.71,86.79 L174.21,78.95 L174.70,71.06 L175.20,63.21 L175.70,55.52 L176.19,48.08 L176.69,41.00 L177.19,34.37 L177.68,28.28 L178.18,22.81 L178.67,18.04 L179.17,14.03 L179.67,10.83 L180.16,8.49 L180.66,7.04 L181.16,6.50 L181.65,6.88 L182.15,8.17 L182.64,10.35 L183.14,13.39 L183.64,17.26 L184.13,21.90 L184.63,27.25 L185.13,33.23 L185.62,39.78 L186.12,46.78 L186.61,54.17 L187.11,61.82 L187.61,69.65 L188.10,77.54 L188.60,85.39 L189.10,93.10 L189.59,100.55 L190.09,107.65 L190.59,114.31 L191.08,120.43 L191.58,125.93 L192.07,130.74 L192.57,134.79 L193.07,138.03 L193.56,140.41 L194.06,141.90 L194.56,142.49 L195.05,142.16 L195.55,140.92 L196.04,138.78 L196.54,135.78 L197.04,131.95 L197.53,127.35 L198.03,122.04 L198.53,116.08 L199.02,109.57 L199.52,102.58 L200.01,95.21 L200.51,87.57 L201.01,79.75 L201.50,71.86 L202.00,64.00 L202.50,56.29 L202.99,48.82 L203.49,41.69 L203.99,35.01 L204.48,28.86 L204.98,23.33 L205.47,18.48 L205.97,14.39 L206.47,11.11 L206.96,8.69 L207.46,7.15 L207.96,6.52 L208.45,6.80 L208.95,8.00 L209.44,10.09 L209.94,13.05 L210.44,16.84 L210.93,21.40 L211.43,26.68 L211.93,32.60 L212.42,39.09 L212.92,46.06 L213.41,53.41 L213.91,61.04 L214.41,68.86 L214.90,76.75 L215.40,84.61 L215.90,92.33 L216.39,99.81 L216.89,106.96 L217.39,113.66 L217.88,119.84 L218.38,125.41 L218.87,130.29 L219.37,134.42 L219.87,137.74 L220.36,140.21 L220.86,141.80 L221.36,142.47 L221.85,142.24 L222.35,141.09 L222.84,139.04 L223.34,136.12 L223.84,132.37 L224.33,127.85 L224.83,122.60 L225.33,116.71 L225.82,110.25 L226.32,103.30 L226.81,95.97 L227.31,88.35 L227.81,80.54 L228.30,72.65 L228.80,64.79 L229.30,57.05 L229.79,49.55 L230.29,42.39 L230.79,35.66 L231.28,29.46 L231.78,23.86 L232.27,18.94 L232.77,14.77 L233.27,11.41 L233.76,8.89 L234.26,7.26 L234.76,6.54 L235.25,6.73 L235.75,7.83 L236.24,9.84 L236.74,12.71 L237.24,16.42 L237.73,20.91 L238.23,26.12 L238.73,31.98 L239.22,38.42 L239.72,45.34 L240.21,52.65 L240.71,60.26 L241.21,68.06 L241.70,75.95 L242.20,83.82 L242.70,91.56 L243.19,99.07 L243.69,106.26 L244.19,113.01 L244.68,119.24 L245.18,124.88 L245.67,129.83 L246.17,134.04 L246.67,137.44 L247.16,140.00 L247.66,141.68 L248.16,142.45 L248.65,142.30 L249.15,141.24 L249.64,139.28 L250.14,136.45 L250.64,132.79 L251.13,128.34 L251.63,123.16 L252.13,117.33 L252.62,110.92 L253.12,104.02 L253.61,96.72 L254.11,89.13 L254.61,81.33 L255.10,73.45 L255.60,65.57 L256.10,57.82 L256.59,50.30 L257.09,43.10 L257.59,36.32 L258.08,30.06 L258.58,24.39 L259.07,19.40 L259.57,15.16 L260.07,11.71 L260.56,9.11 L261.06,7.39 L261.56,6.57 L262.05,6.67 L262.55,7.68 L263.04,9.60 L263.54,12.38 L264.04,16.01 L264.53,20.42 L265.03,25.56 L265.53,31.36 L266.02,37.74 L266.52,44.62 L267.01,51.90 L267.51,59.49 L268.01,67.27 L268.50,75.16 L269.00,83.03" fill="none" stroke="#0a1a36" stroke-width="1.6" opacity="0.5" clip-path="url(#c687)"/><path d="M1.00,15.71 L1.50,12.15 L1.99,9.42 L2.49,7.58 L2.99,6.63 L3.48,6.60 L3.98,7.48 L4.47,9.27 L4.97,11.94 L5.47,15.45 L5.96,19.75 L6.46,24.79 L6.96,30.50 L7.45,36.81 L7.95,43.62 L8.44,50.85 L8.94,58.40 L9.44,66.16 L9.93,74.04 L10.43,81.92 L10.93,89.70 L11.42,97.28 L11.92,104.55 L12.41,111.42 L12.91,117.78 L13.41,123.57 L13.90,128.69 L14.40,133.09 L14.90,136.69 L15.39,139.46 L15.89,141.35 L16.39,142.34 L16.88,142.42 L17.38,141.58 L17.87,139.84 L18.37,137.22 L18.87,133.75 L19.36,129.49 L19.86,124.48 L20.36,118.80 L20.85,112.52 L21.35,105.73 L21.84,98.52 L22.34,90.99 L22.84,83.24 L23.33,75.36 L23.83,67.48 L24.33,59.69 L24.82,52.10 L25.32,44.81 L25.81,37.92 L26.31,31.52 L26.81,25.71 L27.30,20.55 L27.80,16.11 L28.30,12.47 L28.79,9.66 L29.29,7.72 L29.79,6.68 L30.28,6.56 L30.78,7.35 L31.27,9.05 L31.77,11.63 L32.27,15.05 L32.76,19.28 L33.26,24.25 L33.76,29.90 L34.25,36.15 L34.75,42.91 L35.24,50.10 L35.74,57.62 L36.24,65.37 L36.73,73.24 L37.23,81.13 L37.73,88.92 L38.22,96.53 L38.72,103.83 L39.21,110.75 L39.71,117.17 L40.21,123.02 L40.70,128.21 L41.20,132.68 L41.70,136.37 L42.19,139.22 L42.69,141.20 L43.19,142.29 L43.68,142.45 L44.18,141.71 L44.67,140.06 L45.17,137.52 L45.67,134.14 L46.16,129.95 L46.66,125.02 L47.16,119.40 L47.65,113.18 L48.15,106.44 L48.64,99.27 L49.14,91.76 L49.64,84.02 L50.13,76.16 L50.63,68.27 L51.13,60.46 L51.62,52.85 L52.12,45.53 L52.61,38.59 L53.11,32.14 L53.61,26.26 L54.10,21.03 L54.60,16.53 L55.10,12.80 L55.59,9.90 L56.09,7.88 L56.59,6.75 L57.08,6.53 L57.58,7.23 L58.07,8.84 L58.57,11.33 L59.07,14.67 L59.56,18.82 L60.06,23.72 L60.56,29.30 L61.05,35.49 L61.55,42.21 L62.04,49.36 L62.54,56.85 L63.04,64.58 L63.53,72.44 L64.03,80.33 L64.53,88.15 L65.02,95.77 L65.52,103.11 L66.01,110.07 L66.51,116.55 L67.01,122.46 L67.50,127.72 L68.00,132.27 L68.50,136.03 L68.99,138.97 L69.49,141.04 L69.99,142.22 L70.48,142.48 L70.98,141.82 L71.47,140.26 L71.97,137.82 L72.47,134.52 L72.96,130.41 L73.46,125.54 L73.96,119.99 L74.45,113.83 L74.95,107.14 L75.44,100.01 L75.94,92.53 L76.44,84.81 L76.93,76.95 L77.43,69.06 L77.93,61.24 L78.42,53.60 L78.92,46.25 L79.41,39.27 L79.91,32.77 L80.41,26.83 L80.90,21.53 L81.40,16.95 L81.90,13.14 L82.39,10.15 L82.89,8.04 L83.39,6.82 L83.88,6.51 L84.38,7.12 L84.87,8.64 L85.37,11.04 L85.87,14.30 L86.36,18.37 L86.86,23.19 L87.36,28.71 L87.85,34.84 L88.35,41.51 L88.84,48.63 L89.34,56.09 L89.84,63.80 L90.33,71.65 L90.83,79.54 L91.33,87.37 L91.82,95.02 L92.32,102.39 L92.81,109.39 L93.31,115.92 L93.81,121.89 L94.30,127.22 L94.80,131.84 L95.30,135.69 L95.79,138.72 L96.29,140.87 L96.79,142.14 L97.28,142.49 L97.78,141.93 L98.27,140.46 L98.77,138.10 L99.27,134.89 L99.76,130.86 L100.26,126.07 L100.76,120.58 L101.25,114.48 L101.75,107.83 L102.24,100.74 L102.74,93.30 L103.24,85.60 L103.73,77.75 L104.23,69.86 L104.73,62.03 L105.22,54.36 L105.72,46.97 L106.21,39.95 L106.71,33.40 L107.21,27.40 L107.70,22.03 L108.20,17.37 L108.70,13.48 L109.19,10.42 L109.69,8.21 L110.19,6.90 L110.68,6.50 L111.18,7.02 L111.67,8.44 L112.17,10.76 L112.67,13.93 L113.16,17.92 L113.66,22.68 L114.16,28.13 L114.65,34.20 L115.15,40.82 L115.64,47.89 L116.14,55.32 L116.64,63.01 L117.13,70.86 L117.63,78.75 L118.13,86.58 L118.62,94.26 L119.12,101.66 L119.61,108.70 L120.11,115.28 L120.61,121.31 L121.10,126.71 L121.60,131.41 L122.10,135.34 L122.59,138.45 L123.09,140.70 L123.59,142.05 L124.08,142.50 L124.58,142.03 L125.07,140.65 L125.57,138.38 L126.07,135.25 L126.56,131.30 L127.06,126.58 L127.56,121.16 L128.05,115.12 L128.55,108.53 L129.04,101.47 L129.54,94.06 L130.04,86.38 L130.53,78.54 L131.03,70.65 L131.53,62.81 L132.02,55.12 L132.52,47.70 L133.01,40.64 L133.51,34.04 L134.01,27.98 L134.50,22.54 L135.00,17.81 L135.50,13.84 L135.99,10.69 L136.49,8.39 L136.99,6.99 L137.48,6.50 L137.98,6.92 L138.47,8.26 L138.97,10.49 L139.47,13.58 L139.96,17.49 L140.46,22.16 L140.96,27.55 L141.45,33.56 L141.95,40.13 L142.44,47.16 L142.94,54.56 L143.44,62.23 L143.93,70.06 L144.43,77.95 L144.93,85.80 L145.42,93.49 L145.92,100.93 L146.41,108.01 L146.91,114.64 L147.41,120.73 L147.90,126.20 L148.40,130.97 L148.90,134.98 L149.39,138.17 L149.89,140.51 L150.39,141.96 L150.88,142.50 L151.38,142.12 L151.87,140.83 L152.37,138.65 L152.87,135.60 L153.36,131.73 L153.86,127.09 L154.36,121.74 L154.85,115.75 L155.35,109.21 L155.84,102.20 L156.34,94.82 L156.84,87.16 L157.33,79.34 L157.83,71.44 L158.33,63.59 L158.82,55.89 L159.32,48.43 L159.81,41.33 L160.31,34.68 L160.81,28.56 L161.30,23.06 L161.80,18.25 L162.30,14.20 L162.79,10.97 L163.29,8.59 L163.79,7.09 L164.28,6.51 L164.78,6.84 L165.27,8.08 L165.77,10.22 L166.27,13.23 L166.76,17.06 L167.26,21.66 L167.76,26.97 L168.25,32.93 L168.75,39.45 L169.24,46.43 L169.74,53.80 L170.24,61.45 L170.73,69.27 L171.23,77.16 L171.73,85.01 L172.22,92.73 L172.72,100.20 L173.21,107.32 L173.71,114.00 L174.21,120.15 L174.70,125.68 L175.20,130.52 L175.70,134.61 L176.19,137.89 L176.69,140.32 L177.19,141.85 L177.68,142.48 L178.18,142.20 L178.67,141.00 L179.17,138.91 L179.67,135.95 L180.16,132.16 L180.66,127.59 L181.16,122.31 L181.65,116.38 L182.15,109.89 L182.64,102.93 L183.14,95.58 L183.64,87.94 L184.13,80.13 L184.63,72.24 L185.13,64.38 L185.62,56.65 L186.12,49.17 L186.61,42.03 L187.11,35.32 L187.61,29.15 L188.10,23.58 L188.60,18.70 L189.10,14.57 L189.59,11.25 L190.09,8.79 L190.59,7.20 L191.08,6.53 L191.58,6.77 L192.07,7.92 L192.57,9.97 L193.07,12.89 L193.56,16.63 L194.06,21.16 L194.56,26.41 L195.05,32.30 L195.55,38.77 L196.04,45.71 L196.54,53.04 L197.04,60.67 L197.53,68.47 L198.03,76.36 L198.53,84.23 L199.02,91.96 L199.52,99.46 L200.01,106.62 L200.51,113.35 L201.01,119.55 L201.50,125.15 L202.00,130.07 L202.50,134.24 L202.99,137.60 L203.49,140.11 L203.99,141.74 L204.48,142.46 L204.98,142.27 L205.47,141.16 L205.97,139.16 L206.47,136.28 L206.96,132.57 L207.46,128.08 L207.96,122.87 L208.45,117.01 L208.95,110.57 L209.44,103.65 L209.94,96.33 L210.44,88.72 L210.93,80.92 L211.43,73.03 L211.93,65.17 L212.42,57.42 L212.92,49.91 L213.41,42.73 L213.91,35.98 L214.41,29.74 L214.90,24.11 L215.40,19.16 L215.90,14.95 L216.39,11.55 L216.89,8.99 L217.39,7.32 L217.88,6.55 L218.38,6.70 L218.87,7.76 L219.37,9.72 L219.87,12.55 L220.36,16.22 L220.86,20.67 L221.36,25.85 L221.85,31.68 L222.35,38.09 L222.84,44.99 L223.34,52.29 L223.84,59.89 L224.33,67.68 L224.83,75.57 L225.33,83.44 L225.82,91.19 L226.32,98.72 L226.81,105.92 L227.31,112.69 L227.81,118.96 L228.30,124.62 L228.80,129.61 L229.30,133.85 L229.79,137.30 L230.29,139.90 L230.79,141.62 L231.28,142.43 L231.78,142.33 L232.27,141.31 L232.77,139.40 L233.27,136.61 L233.76,132.98 L234.26,128.57 L234.76,123.43 L235.25,117.63 L235.75,111.24 L236.24,104.36 L236.74,97.08 L237.24,89.50 L237.73,81.71 L238.23,73.83 L238.73,65.95 L239.22,58.20 L239.72,50.66 L240.21,43.44 L240.71,36.64 L241.21,30.35 L241.70,24.65 L242.20,19.63 L242.70,15.34 L243.19,11.86 L243.69,9.21 L244.19,7.45 L244.68,6.59 L245.18,6.64 L245.67,7.61 L246.17,9.48 L246.67,12.23 L247.16,15.81 L247.66,20.19 L248.16,25.30 L248.65,31.07 L249.15,37.42 L249.64,44.28 L250.14,51.54 L250.64,59.11 L251.13,66.89 L251.63,74.77 L252.13,82.65 L252.62,90.42 L253.12,97.97 L253.61,105.21 L254.11,112.03 L254.61,118.35 L255.10,124.08 L255.60,129.14 L256.10,133.46 L256.59,136.99 L257.09,139.67 L257.59,141.48 L258.08,142.39 L258.58,142.38 L259.07,141.46 L259.57,139.63 L260.07,136.93 L260.56,133.39 L261.06,129.05 L261.56,123.98 L262.05,118.24 L262.55,111.91 L263.04,105.08 L263.54,97.83 L264.04,90.28 L264.53,82.50 L265.03,74.63 L265.53,66.74 L266.02,58.97 L266.52,51.40 L267.01,44.15 L267.51,37.30 L268.01,30.95 L268.50,25.20 L269.00,20.10" fill="none" stroke="#0a1a36" stroke-width="1.6" opacity="0.5" clip-path="url(#c687)"/><path d="M1.00,20.10 L1.50,25.20 L1.99,30.95 L2.49,37.30 L2.99,44.15 L3.48,51.40 L3.98,58.97 L4.47,66.74 L4.97,74.63 L5.47,82.50 L5.96,90.28 L6.46,97.83 L6.96,105.08 L7.45,111.91 L7.95,118.24 L8.44,123.98 L8.94,129.05 L9.44,133.39 L9.93,136.93 L10.43,139.63 L10.93,141.46 L11.42,142.38 L11.92,142.39 L12.41,141.48 L12.91,139.67 L13.41,136.99 L13.90,133.46 L14.40,129.14 L14.90,124.08 L15.39,118.35 L15.89,112.03 L16.39,105.21 L16.88,97.97 L17.38,90.42 L17.87,82.65 L18.37,74.77 L18.87,66.89 L19.36,59.11 L19.86,51.54 L20.36,44.28 L20.85,37.42 L21.35,31.07 L21.84,25.30 L22.34,20.19 L22.84,15.81 L23.33,12.23 L23.83,9.48 L24.33,7.61 L24.82,6.64 L25.32,6.59 L25.81,7.45 L26.31,9.21 L26.81,11.86 L27.30,15.34 L27.80,19.63 L28.30,24.65 L28.79,30.35 L29.29,36.64 L29.79,43.44 L30.28,50.66 L30.78,58.20 L31.27,65.95 L31.77,73.83 L32.27,81.71 L32.76,89.50 L33.26,97.08 L33.76,104.36 L34.25,111.24 L34.75,117.63 L35.24,123.43 L35.74,128.57 L36.24,132.98 L36.73,136.61 L37.23,139.40 L37.73,141.31 L38.22,142.33 L38.72,142.43 L39.21,141.62 L39.71,139.90 L40.21,137.30 L40.70,133.85 L41.20,129.61 L41.70,124.62 L42.19,118.96 L42.69,112.69 L43.19,105.92 L43.68,98.72 L44.18,91.19 L44.67,83.44 L45.17,75.57 L45.67,67.68 L46.16,59.89 L46.66,52.29 L47.16,44.99 L47.65,38.09 L48.15,31.68 L48.64,25.85 L49.14,20.67 L49.64,16.22 L50.13,12.55 L50.63,9.72 L51.13,7.76 L51.62,6.70 L52.12,6.55 L52.61,7.32 L53.11,8.99 L53.61,11.55 L54.10,14.95 L54.60,19.16 L55.10,24.11 L55.59,29.74 L56.09,35.98 L56.59,42.73 L57.08,49.91 L57.58,57.42 L58.07,65.17 L58.57,73.03 L59.07,80.92 L59.56,88.72 L60.06,96.33 L60.56,103.65 L61.05,110.57 L61.55,117.01 L62.04,122.87 L62.54,128.08 L63.04,132.57 L63.53,136.28 L64.03,139.16 L64.53,141.16 L65.02,142.27 L65.52,142.46 L66.01,141.74 L66.51,140.11 L67.01,137.60 L67.50,134.24 L68.00,130.07 L68.50,125.15 L68.99,119.55 L69.49,113.35 L69.99,106.62 L70.48,99.46 L70.98,91.96 L71.47,84.23 L71.97,76.36 L72.47,68.47 L72.96,60.67 L73.46,53.04 L73.96,45.71 L74.45,38.77 L74.95,32.30 L75.44,26.41 L75.94,21.16 L76.44,16.63 L76.93,12.89 L77.43,9.97 L77.93,7.92 L78.42,6.77 L78.92,6.53 L79.41,7.20 L79.91,8.79 L80.41,11.25 L80.90,14.57 L81.40,18.70 L81.90,23.58 L82.39,29.15 L82.89,35.32 L83.39,42.03 L83.88,49.17 L84.38,56.65 L84.87,64.38 L85.37,72.24 L85.87,80.13 L86.36,87.94 L86.86,95.58 L87.36,102.93 L87.85,109.89 L88.35,116.38 L88.84,122.31 L89.34,127.59 L89.84,132.16 L90.33,135.95 L90.83,138.91 L91.33,141.00 L91.82,142.20 L92.32,142.48 L92.81,141.85 L93.31,140.32 L93.81,137.89 L94.30,134.61 L94.80,130.52 L95.30,125.68 L95.79,120.15 L96.29,114.00 L96.79,107.32 L97.28,100.20 L97.78,92.73 L98.27,85.01 L98.77,77.16 L99.27,69.27 L99.76,61.45 L100.26,53.80 L100.76,46.43 L101.25,39.45 L101.75,32.93 L102.24,26.97 L102.74,21.66 L103.24,17.06 L103.73,13.23 L104.23,10.22 L104.73,8.08 L105.22,6.84 L105.72,6.51 L106.21,7.09 L106.71,8.59 L107.21,10.97 L107.70,14.20 L108.20,18.25 L108.70,23.06 L109.19,28.56 L109.69,34.68 L110.19,41.33 L110.68,48.43 L111.18,55.89 L111.67,63.59 L112.17,71.44 L112.67,79.34 L113.16,87.16 L113.66,94.82 L114.16,102.20 L114.65,109.21 L115.15,115.75 L115.64,121.74 L116.14,127.09 L116.64,131.73 L117.13,135.60 L117.63,138.65 L118.13,140.83 L118.62,142.12 L119.12,142.50 L119.61,141.96 L120.11,140.51 L120.61,138.17 L121.10,134.98 L121.60,130.97 L122.10,126.20 L122.59,120.73 L123.09,114.64 L123.59,108.01 L124.08,100.93 L124.58,93.49 L125.07,85.80 L125.57,77.95 L126.07,70.06 L126.56,62.23 L127.06,54.56 L127.56,47.16 L128.05,40.13 L128.55,33.56 L129.04,27.55 L129.54,22.16 L130.04,17.49 L130.53,13.58 L131.03,10.49 L131.53,8.26 L132.02,6.92 L132.52,6.50 L133.01,6.99 L133.51,8.39 L134.01,10.69 L134.50,13.84 L135.00,17.81 L135.50,22.54 L135.99,27.98 L136.49,34.04 L136.99,40.64 L137.48,47.70 L137.98,55.12 L138.47,62.81 L138.97,70.65 L139.47,78.54 L139.96,86.38 L140.46,94.06 L140.96,101.47 L141.45,108.53 L141.95,115.12 L142.44,121.16 L142.94,126.58 L143.44,131.30 L143.93,135.25 L144.43,138.38 L144.93,140.65 L145.42,142.03 L145.92,142.50 L146.41,142.05 L146.91,140.70 L147.41,138.45 L147.90,135.34 L148.40,131.41 L148.90,126.71 L149.39,121.31 L149.89,115.28 L150.39,108.70 L150.88,101.66 L151.38,94.26 L151.87,86.58 L152.37,78.75 L152.87,70.86 L153.36,63.01 L153.86,55.32 L154.36,47.89 L154.85,40.82 L155.35,34.20 L155.84,28.13 L156.34,22.68 L156.84,17.92 L157.33,13.93 L157.83,10.76 L158.33,8.44 L158.82,7.02 L159.32,6.50 L159.81,6.90 L160.31,8.21 L160.81,10.42 L161.30,13.48 L161.80,17.37 L162.30,22.03 L162.79,27.40 L163.29,33.40 L163.79,39.95 L164.28,46.97 L164.78,54.36 L165.27,62.03 L165.77,69.86 L166.27,77.75 L166.76,85.60 L167.26,93.30 L167.76,100.74 L168.25,107.83 L168.75,114.48 L169.24,120.58 L169.74,126.07 L170.24,130.86 L170.73,134.89 L171.23,138.10 L171.73,140.46 L172.22,141.93 L172.72,142.49 L173.21,142.14 L173.71,140.87 L174.21,138.72 L174.70,135.69 L175.20,131.84 L175.70,127.22 L176.19,121.89 L176.69,115.92 L177.19,109.39 L177.68,102.39 L178.18,95.02 L178.67,87.37 L179.17,79.54 L179.67,71.65 L180.16,63.80 L180.66,56.09 L181.16,48.63 L181.65,41.51 L182.15,34.84 L182.64,28.71 L183.14,23.19 L183.64,18.37 L184.13,14.30 L184.63,11.04 L185.13,8.64 L185.62,7.12 L186.12,6.51 L186.61,6.82 L187.11,8.04 L187.61,10.15 L188.10,13.14 L188.60,16.95 L189.10,21.53 L189.59,26.83 L190.09,32.77 L190.59,39.27 L191.08,46.25 L191.58,53.60 L192.07,61.24 L192.57,69.06 L193.07,76.95 L193.56,84.81 L194.06,92.53 L194.56,100.01 L195.05,107.14 L195.55,113.83 L196.04,119.99 L196.54,125.54 L197.04,130.41 L197.53,134.52 L198.03,137.82 L198.53,140.26 L199.02,141.82 L199.52,142.48 L200.01,142.22 L200.51,141.04 L201.01,138.97 L201.50,136.03 L202.00,132.27 L202.50,127.72 L202.99,122.46 L203.49,116.55 L203.99,110.07 L204.48,103.11 L204.98,95.77 L205.47,88.15 L205.97,80.33 L206.47,72.44 L206.96,64.58 L207.46,56.85 L207.96,49.36 L208.45,42.21 L208.95,35.49 L209.44,29.30 L209.94,23.72 L210.44,18.82 L210.93,14.67 L211.43,11.33 L211.93,8.84 L212.42,7.23 L212.92,6.53 L213.41,6.75 L213.91,7.88 L214.41,9.90 L214.90,12.80 L215.40,16.53 L215.90,21.03 L216.39,26.26 L216.89,32.14 L217.39,38.59 L217.88,45.53 L218.38,52.85 L218.87,60.46 L219.37,68.27 L219.87,76.16 L220.36,84.02 L220.86,91.76 L221.36,99.27 L221.85,106.44 L222.35,113.18 L222.84,119.40 L223.34,125.02 L223.84,129.95 L224.33,134.14 L224.83,137.52 L225.33,140.06 L225.82,141.71 L226.32,142.45 L226.81,142.29 L227.31,141.20 L227.81,139.22 L228.30,136.37 L228.80,132.68 L229.30,128.21 L229.79,123.02 L230.29,117.17 L230.79,110.75 L231.28,103.83 L231.78,96.53 L232.27,88.92 L232.77,81.13 L233.27,73.24 L233.76,65.37 L234.26,57.62 L234.76,50.10 L235.25,42.91 L235.75,36.15 L236.24,29.90 L236.74,24.25 L237.24,19.28 L237.73,15.05 L238.23,11.63 L238.73,9.05 L239.22,7.35 L239.72,6.56 L240.21,6.68 L240.71,7.72 L241.21,9.66 L241.70,12.47 L242.20,16.11 L242.70,20.55 L243.19,25.71 L243.69,31.52 L244.19,37.92 L244.68,44.81 L245.18,52.10 L245.67,59.69 L246.17,67.48 L246.67,75.36 L247.16,83.24 L247.66,90.99 L248.16,98.52 L248.65,105.73 L249.15,112.52 L249.64,118.80 L250.14,124.48 L250.64,129.49 L251.13,133.75 L251.63,137.22 L252.13,139.84 L252.62,141.58 L253.12,142.42 L253.61,142.34 L254.11,141.35 L254.61,139.46 L255.10,136.69 L255.60,133.09 L256.10,128.69 L256.59,123.57 L257.09,117.78 L257.59,111.42 L258.08,104.55 L258.58,97.28 L259.07,89.70 L259.57,81.92 L260.07,74.04 L260.56,66.16 L261.06,58.40 L261.56,50.85 L262.05,43.62 L262.55,36.81 L263.04,30.50 L263.54,24.79 L264.04,19.75 L264.53,15.45 L265.03,11.94 L265.53,9.27 L266.02,7.48 L266.52,6.60 L267.01,6.63 L267.51,7.58 L268.01,9.42 L268.50,12.15 L269.00,15.71" fill="none" stroke="#0c1c3c" stroke-width="4" opacity="0.4" clip-path="url(#c687)"/><path d="M1.00,20.10 L1.50,25.20 L1.99,30.95 L2.49,37.30 L2.99,44.15 L3.48,51.40 L3.98,58.97 L4.47,66.74 L4.97,74.63 L5.47,82.50 L5.96,90.28 L6.46,97.83 L6.96,105.08 L7.45,111.91 L7.95,118.24 L8.44,123.98 L8.94,129.05 L9.44,133.39 L9.93,136.93 L10.43,139.63 L10.93,141.46 L11.42,142.38 L11.92,142.39 L12.41,141.48 L12.91,139.67 L13.41,136.99 L13.90,133.46 L14.40,129.14 L14.90,124.08 L15.39,118.35 L15.89,112.03 L16.39,105.21 L16.88,97.97 L17.38,90.42 L17.87,82.65 L18.37,74.77 L18.87,66.89 L19.36,59.11 L19.86,51.54 L20.36,44.28 L20.85,37.42 L21.35,31.07 L21.84,25.30 L22.34,20.19 L22.84,15.81 L23.33,12.23 L23.83,9.48 L24.33,7.61 L24.82,6.64 L25.32,6.59 L25.81,7.45 L26.31,9.21 L26.81,11.86 L27.30,15.34 L27.80,19.63 L28.30,24.65 L28.79,30.35 L29.29,36.64 L29.79,43.44 L30.28,50.66 L30.78,58.20 L31.27,65.95 L31.77,73.83 L32.27,81.71 L32.76,89.50 L33.26,97.08 L33.76,104.36 L34.25,111.24 L34.75,117.63 L35.24,123.43 L35.74,128.57 L36.24,132.98 L36.73,136.61 L37.23,139.40 L37.73,141.31 L38.22,142.33 L38.72,142.43 L39.21,141.62 L39.71,139.90 L40.21,137.30 L40.70,133.85 L41.20,129.61 L41.70,124.62 L42.19,118.96 L42.69,112.69 L43.19,105.92 L43.68,98.72 L44.18,91.19 L44.67,83.44 L45.17,75.57 L45.67,67.68 L46.16,59.89 L46.66,52.29 L47.16,44.99 L47.65,38.09 L48.15,31.68 L48.64,25.85 L49.14,20.67 L49.64,16.22 L50.13,12.55 L50.63,9.72 L51.13,7.76 L51.62,6.70 L52.12,6.55 L52.61,7.32 L53.11,8.99 L53.61,11.55 L54.10,14.95 L54.60,19.16 L55.10,24.11 L55.59,29.74 L56.09,35.98 L56.59,42.73 L57.08,49.91 L57.58,57.42 L58.07,65.17 L58.57,73.03 L59.07,80.92 L59.56,88.72 L60.06,96.33 L60.56,103.65 L61.05,110.57 L61.55,117.01 L62.04,122.87 L62.54,128.08 L63.04,132.57 L63.53,136.28 L64.03,139.16 L64.53,141.16 L65.02,142.27 L65.52,142.46 L66.01,141.74 L66.51,140.11 L67.01,137.60 L67.50,134.24 L68.00,130.07 L68.50,125.15 L68.99,119.55 L69.49,113.35 L69.99,106.62 L70.48,99.46 L70.98,91.96 L71.47,84.23 L71.97,76.36 L72.47,68.47 L72.96,60.67 L73.46,53.04 L73.96,45.71 L74.45,38.77 L74.95,32.30 L75.44,26.41 L75.94,21.16 L76.44,16.63 L76.93,12.89 L77.43,9.97 L77.93,7.92 L78.42,6.77 L78.92,6.53 L79.41,7.20 L79.91,8.79 L80.41,11.25 L80.90,14.57 L81.40,18.70 L81.90,23.58 L82.39,29.15 L82.89,35.32 L83.39,42.03 L83.88,49.17 L84.38,56.65 L84.87,64.38 L85.37,72.24 L85.87,80.13 L86.36,87.94 L86.86,95.58 L87.36,102.93 L87.85,109.89 L88.35,116.38 L88.84,122.31 L89.34,127.59 L89.84,132.16 L90.33,135.95 L90.83,138.91 L91.33,141.00 L91.82,142.20 L92.32,142.48 L92.81,141.85 L93.31,140.32 L93.81,137.89 L94.30,134.61 L94.80,130.52 L95.30,125.68 L95.79,120.15 L96.29,114.00 L96.79,107.32 L97.28,100.20 L97.78,92.73 L98.27,85.01 L98.77,77.16 L99.27,69.27 L99.76,61.45 L100.26,53.80 L100.76,46.43 L101.25,39.45 L101.75,32.93 L102.24,26.97 L102.74,21.66 L103.24,17.06 L103.73,13.23 L104.23,10.22 L104.73,8.08 L105.22,6.84 L105.72,6.51 L106.21,7.09 L106.71,8.59 L107.21,10.97 L107.70,14.20 L108.20,18.25 L108.70,23.06 L109.19,28.56 L109.69,34.68 L110.19,41.33 L110.68,48.43 L111.18,55.89 L111.67,63.59 L112.17,71.44 L112.67,79.34 L113.16,87.16 L113.66,94.82 L114.16,102.20 L114.65,109.21 L115.15,115.75 L115.64,121.74 L116.14,127.09 L116.64,131.73 L117.13,135.60 L117.63,138.65 L118.13,140.83 L118.62,142.12 L119.12,142.50 L119.61,141.96 L120.11,140.51 L120.61,138.17 L121.10,134.98 L121.60,130.97 L122.10,126.20 L122.59,120.73 L123.09,114.64 L123.59,108.01 L124.08,100.93 L124.58,93.49 L125.07,85.80 L125.57,77.95 L126.07,70.06 L126.56,62.23 L127.06,54.56 L127.56,47.16 L128.05,40.13 L128.55,33.56 L129.04,27.55 L129.54,22.16 L130.04,17.49 L130.53,13.58 L131.03,10.49 L131.53,8.26 L132.02,6.92 L132.52,6.50 L133.01,6.99 L133.51,8.39 L134.01,10.69 L134.50,13.84 L135.00,17.81 L135.50,22.54 L135.99,27.98 L136.49,34.04 L136.99,40.64 L137.48,47.70 L137.98,55.12 L138.47,62.81 L138.97,70.65 L139.47,78.54 L139.96,86.38 L140.46,94.06 L140.96,101.47 L141.45,108.53 L141.95,115.12 L142.44,121.16 L142.94,126.58 L143.44,131.30 L143.93,135.25 L144.43,138.38 L144.93,140.65 L145.42,142.03 L145.92,142.50 L146.41,142.05 L146.91,140.70 L147.41,138.45 L147.90,135.34 L148.40,131.41 L148.90,126.71 L149.39,121.31 L149.89,115.28 L150.39,108.70 L150.88,101.66 L151.38,94.26 L151.87,86.58 L152.37,78.75 L152.87,70.86 L153.36,63.01 L153.86,55.32 L154.36,47.89 L154.85,40.82 L155.35,34.20 L155.84,28.13 L156.34,22.68 L156.84,17.92 L157.33,13.93 L157.83,10.76 L158.33,8.44 L158.82,7.02 L159.32,6.50 L159.81,6.90 L160.31,8.21 L160.81,10.42 L161.30,13.48 L161.80,17.37 L162.30,22.03 L162.79,27.40 L163.29,33.40 L163.79,39.95 L164.28,46.97 L164.78,54.36 L165.27,62.03 L165.77,69.86 L166.27,77.75 L166.76,85.60 L167.26,93.30 L167.76,100.74 L168.25,107.83 L168.75,114.48 L169.24,120.58 L169.74,126.07 L170.24,130.86 L170.73,134.89 L171.23,138.10 L171.73,140.46 L172.22,141.93 L172.72,142.49 L173.21,142.14 L173.71,140.87 L174.21,138.72 L174.70,135.69 L175.20,131.84 L175.70,127.22 L176.19,121.89 L176.69,115.92 L177.19,109.39 L177.68,102.39 L178.18,95.02 L178.67,87.37 L179.17,79.54 L179.67,71.65 L180.16,63.80 L180.66,56.09 L181.16,48.63 L181.65,41.51 L182.15,34.84 L182.64,28.71 L183.14,23.19 L183.64,18.37 L184.13,14.30 L184.63,11.04 L185.13,8.64 L185.62,7.12 L186.12,6.51 L186.61,6.82 L187.11,8.04 L187.61,10.15 L188.10,13.14 L188.60,16.95 L189.10,21.53 L189.59,26.83 L190.09,32.77 L190.59,39.27 L191.08,46.25 L191.58,53.60 L192.07,61.24 L192.57,69.06 L193.07,76.95 L193.56,84.81 L194.06,92.53 L194.56,100.01 L195.05,107.14 L195.55,113.83 L196.04,119.99 L196.54,125.54 L197.04,130.41 L197.53,134.52 L198.03,137.82 L198.53,140.26 L199.02,141.82 L199.52,142.48 L200.01,142.22 L200.51,141.04 L201.01,138.97 L201.50,136.03 L202.00,132.27 L202.50,127.72 L202.99,122.46 L203.49,116.55 L203.99,110.07 L204.48,103.11 L204.98,95.77 L205.47,88.15 L205.97,80.33 L206.47,72.44 L206.96,64.58 L207.46,56.85 L207.96,49.36 L208.45,42.21 L208.95,35.49 L209.44,29.30 L209.94,23.72 L210.44,18.82 L210.93,14.67 L211.43,11.33 L211.93,8.84 L212.42,7.23 L212.92,6.53 L213.41,6.75 L213.91,7.88 L214.41,9.90 L214.90,12.80 L215.40,16.53 L215.90,21.03 L216.39,26.26 L216.89,32.14 L217.39,38.59 L217.88,45.53 L218.38,52.85 L218.87,60.46 L219.37,68.27 L219.87,76.16 L220.36,84.02 L220.86,91.76 L221.36,99.27 L221.85,106.44 L222.35,113.18 L222.84,119.40 L223.34,125.02 L223.84,129.95 L224.33,134.14 L224.83,137.52 L225.33,140.06 L225.82,141.71 L226.32,142.45 L226.81,142.29 L227.31,141.20 L227.81,139.22 L228.30,136.37 L228.80,132.68 L229.30,128.21 L229.79,123.02 L230.29,117.17 L230.79,110.75 L231.28,103.83 L231.78,96.53 L232.27,88.92 L232.77,81.13 L233.27,73.24 L233.76,65.37 L234.26,57.62 L234.76,50.10 L235.25,42.91 L235.75,36.15 L236.24,29.90 L236.74,24.25 L237.24,19.28 L237.73,15.05 L238.23,11.63 L238.73,9.05 L239.22,7.35 L239.72,6.56 L240.21,6.68 L240.71,7.72 L241.21,9.66 L241.70,12.47 L242.20,16.11 L242.70,20.55 L243.19,25.71 L243.69,31.52 L244.19,37.92 L244.68,44.81 L245.18,52.10 L245.67,59.69 L246.17,67.48 L246.67,75.36 L247.16,83.24 L247.66,90.99 L248.16,98.52 L248.65,105.73 L249.15,112.52 L249.64,118.80 L250.14,124.48 L250.64,129.49 L251.13,133.75 L251.63,137.22 L252.13,139.84 L252.62,141.58 L253.12,142.42 L253.61,142.34 L254.11,141.35 L254.61,139.46 L255.10,136.69 L255.60,133.09 L256.10,128.69 L256.59,123.57 L257.09,117.78 L257.59,111.42 L258.08,104.55 L258.58,97.28 L259.07,89.70 L259.57,81.92 L260.07,74.04 L260.56,66.16 L261.06,58.40 L261.56,50.85 L262.05,43.62 L262.55,36.81 L263.04,30.50 L263.54,24.79 L264.04,19.75 L264.53,15.45 L265.03,11.94 L265.53,9.27 L266.02,7.48 L266.52,6.60 L267.01,6.63 L267.51,7.58 L268.01,9.42 L268.50,12.15 L269.00,15.71" fill="none" stroke="#3cbce8" stroke-width="1.35" clip-path="url(#c687)"/></svg>
<div style="left:273px;top:260px;width:812px;height:64px;background:#861f87;"></div>
<div style="left:606.91px;top:272.90px;font:700 36px/36px 'Liberation Sans';color:#ffffff;white-space:pre;transform:scaleX(0.9436);transform-origin:0 0;">Relay</div>
<svg style="left:713px;top:272px;" width="40" height="40" viewBox="0 0 40 40"><g fill="none" stroke="#ff6a10" stroke-linecap="round"><path d="M11.64 10.04 A13 13 0 1 0 28.36 10.04" stroke-width="5"/><line x1="20" y1="7" x2="20" y2="19" stroke-width="5.5"/></g></svg>
<div style="left:273px;top:340px;width:812px;height:54px;background:#861f87;"></div>
<div style="left:646.04px;top:352.90px;font:400 26px/26px 'Liberation Sans';color:#ffffff;white-space:pre;transform:scaleX(0.9815);transform-origin:0 0;">Relay</div>
<div style="left:273px;top:402px;width:812px;height:646px;background:#333333;"></div>
<div style="left:280.13px;top:415.90px;font:400 28px/28px 'Liberation Sans';color:#ffffff;white-space:pre;transform:scaleX(0.9343);transform-origin:0 0;">Relay</div>
<div style="left:281px;top:467px;width:796px;height:54px;background:#6a6a6a;"></div>
<div style="left:281px;top:467px;width:561px;height:54px;background:#ff6600;"></div>
<div style="left:279.94px;top:482.00px;font:400 24px/24px 'Liberation Sans';color:#ffffff;white-space:pre;transform:scaleX(1.0309);transform-origin:0 0;">Detection threshold</div>
<div style="left:934.54px;top:482.50px;font:400 24px/24px 'Liberation Sans';color:#ffffff;white-space:pre;transform:scaleX(0.9610);transform-origin:0 0;">-7.1 dB (44%)</div>
<div style="left:281px;top:529px;width:796px;height:54px;background:#000;box-sizing:border-box;border:1px solid #6a6a6a;"></div>
<div style="left:282px;top:530px;width:782px;height:52px;background:#ff0000;"></div>
<div style="left:997.35px;top:544.10px;font:400 24px/24px 'Liberation Sans';color:#ffffff;white-space:pre;transform:scaleX(0.9534);transform-origin:0 0;">98.4 %</div>
<div style="left:281px;top:591px;width:796px;height:54px;background:#6a6a6a;"></div>
<div style="left:284.90px;top:605.70px;font:400 24px/24px 'Liberation Sans';color:#ffffff;white-space:pre;transform:scaleX(0.9894);transform-origin:0 0;">Target server IP/name</div>
<div style="left:527px;top:594px;width:547px;height:48px;background:#333333;"></div>
<div style="left:534.70px;top:607.54px;font:400 21.6px/21.6px 'Liberation Mono';color:#ffffff;white-space:pre;-webkit-text-stroke:0.35px #fff;">127.0.0.1</div>
<div style="left:281px;top:653px;width:796px;height:54px;background:#6a6a6a;"></div>
<div style="left:282.80px;top:667.70px;font:400 24px/24px 'Liberation Sans';color:#ffffff;white-space:pre;transform:scaleX(1.0476);transform-origin:0 0;">Port</div>
<div style="left:337px;top:656px;width:737px;height:48px;background:#333333;"></div>
<div style="left:344.10px;top:669.54px;font:400 21.6px/21.6px 'Liberation Mono';color:#ffffff;white-space:pre;-webkit-text-stroke:0.35px #fff;">4001</div>
<div style="left:281px;top:715px;width:796px;height:54px;background:#6a6a6a;"></div>
<div style="left:283.02px;top:729.70px;font:400 24px/24px 'Liberation Sans';color:#ffffff;white-space:pre;transform:scaleX(0.9398);transform-origin:0 0;">Relay OPEN PI code</div>
<div style="left:502px;top:718px;width:572px;height:48px;background:#333333;"></div>
<div style="left:510.40px;top:731.54px;font:400 21.6px/21.6px 'Liberation Mono';color:#ffffff;white-space:pre;-webkit-text-stroke:0.35px #fff;">1111</div>
<div style="left:281px;top:777px;width:796px;height:54px;background:#6a6a6a;"></div>
<div style="left:283.05px;top:791.70px;font:400 24px/24px 'Liberation Sans';color:#ffffff;white-space:pre;transform:scaleX(0.9226);transform-origin:0 0;">Relay CLOSED PI code</div>
<div style="left:527px;top:780px;width:547px;height:48px;background:#333333;"></div>
<div style="left:535.20px;top:793.54px;font:400 21.6px/21.6px 'Liberation Mono';color:#ffffff;white-space:pre;-webkit-text-stroke:0.35px #fff;">2222</div>
<div style="left:281px;top:839px;width:796px;height:54px;background:#6a6a6a;"></div>
<div style="left:281px;top:839px;width:13px;height:54px;background:#ff6600;"></div>
<div style="left:279.47px;top:853.60px;font:400 24px/24px 'Liberation Sans';color:#ffffff;white-space:pre;transform:scaleX(1.0171);transform-origin:0 0;">Repeat interval</div>
<div style="left:957.73px;top:853.90px;font:400 24px/24px 'Liberation Sans';color:#ffffff;white-space:pre;transform:scaleX(0.9719);transform-origin:0 0;">60 seconds</div>
<div style="left:281px;top:901px;width:796px;height:54px;background:#6a6a6a;"></div>
<div style="left:284.90px;top:915.70px;font:400 24px/24px 'Liberation Sans';color:#ffffff;white-space:pre;transform:scaleX(0.9673);transform-origin:0 0;">Active PI code</div>
<div style="left:442px;top:904px;width:632px;height:48px;background:#6a6a6a;box-sizing:border-box;border:1px solid #3c3c3c;"></div>
<div style="left:450.30px;top:917.54px;font:400 21.6px/21.6px 'Liberation Mono';color:#ffffff;white-space:pre;-webkit-text-stroke:0.35px #fff;">2222</div>
<div style="left:281px;top:963px;width:796px;height:78px;background:#6a6a6a;"></div>
<div style="left:282.91px;top:989.80px;font:400 24px/24px 'Liberation Sans';color:#ffffff;white-space:pre;transform:scaleX(0.9950);transform-origin:0 0;">Last transmit result</div>
<div style="left:493px;top:966px;width:581px;height:72px;background:#6a6a6a;box-sizing:border-box;border:1px solid #3c3c3c;"></div>
<div style="left:501.00px;top:977.74px;font:400 21.6px/21.6px 'Liberation Mono';color:#ffffff;white-space:pre;-webkit-text-stroke:0.35px #fff;">Successfullly sent string PI=2222</div>
<div style="left:501.00px;top:1005.84px;font:400 21.6px/21.6px 'Liberation Mono';color:#ffffff;white-space:pre;-webkit-text-stroke:0.35px #fff;">Message # 2</div>
</body></html>
